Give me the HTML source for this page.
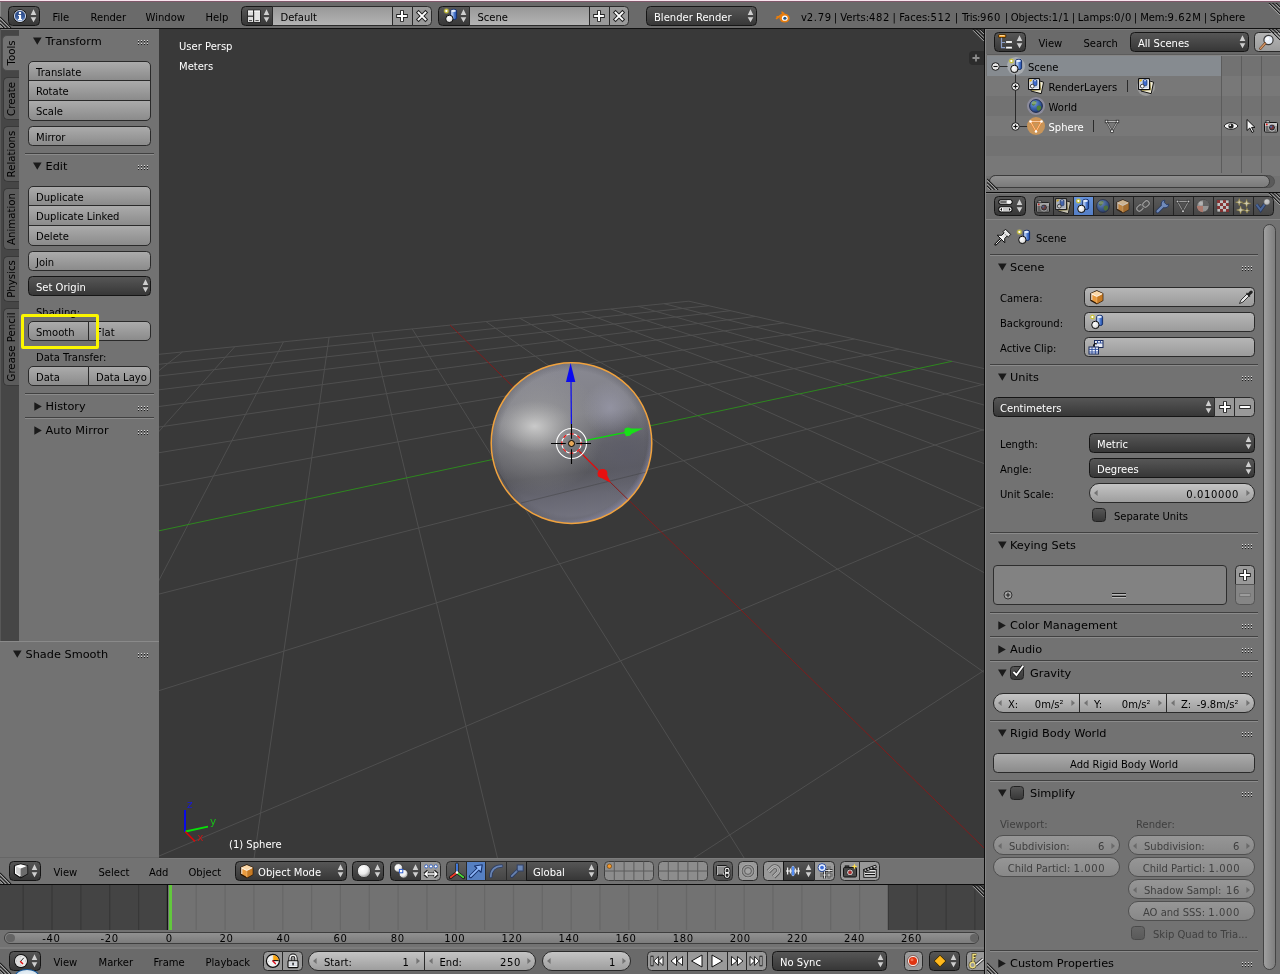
<!DOCTYPE html>
<html lang="en"><head><meta charset="utf-8"><title>Blender</title>
<style>
*{margin:0;padding:0;box-sizing:border-box}
html,body{width:1280px;height:974px;overflow:hidden;background:#727272}
body{position:relative;font-family:"DejaVu Sans", "Liberation Sans", sans-serif;font-size:10px;color:#000}
.a{position:absolute}
.t{position:absolute;white-space:nowrap;line-height:14px;height:14px}
.tw{color:#fff}
.n{letter-spacing:.64px}
.h{position:absolute;white-space:nowrap;font-size:11.3px;line-height:14px;height:14px}
.w{position:absolute;border:1px solid #2a2a2a;border-radius:4.5px;white-space:nowrap;overflow:hidden}
.tool{background:linear-gradient(#ababab,#8b8b8b)}
.reg{background:#999}
.menu{background:linear-gradient(#565656,#373737);color:#fff;border-color:#151515}
.num{background:linear-gradient(#c4c4c4,#9e9e9e);border-radius:10px}
.txt{background:linear-gradient(#989898,#b3b3b3)}
.opt{background:linear-gradient(#565656,#383838);border-radius:3.5px;border-color:#222}
.sep{position:absolute;height:1px;background:#8c8c8c}
.dis{opacity:.5}
svg{position:absolute;overflow:visible}
#app{position:absolute;left:0;top:0;width:1280px;height:974px;will-change:transform}
</style></head>
<body><div id="app">
<div class="a" style="left:0px;top:0px;width:1280px;height:1.2px;background:#f8e4ee;"></div>
<div class="a" style="left:0px;top:1.2px;width:1280px;height:0.8px;background:#80586a;"></div>
<div class="a" style="left:0px;top:2px;width:1280px;height:26px;background:#6a6a6a;"></div>
<div class="a" style="left:0px;top:2px;width:1px;height:26px;background:#868686;"></div>
<div class="a" style="left:0px;top:28px;width:1280px;height:1.2px;background:#101010;"></div>
<div class="a" style="left:0px;top:29px;width:159px;height:612px;background:#727272;"></div>
<div class="a" style="left:0px;top:29px;width:19px;height:612px;background:#464646;"></div>
<div class="a" style="left:0px;top:29px;width:159px;height:1px;background:#7a7a7a;"></div>
<div class="a" style="left:0px;top:29px;width:1px;height:612px;background:#585858;"></div>
<div class="a" style="left:0px;top:641px;width:159px;height:217px;background:#727272;"></div>
<div class="a" style="left:0px;top:641px;width:159px;height:1px;background:#8a8a8a;"></div>
<div class="a" style="left:0px;top:857px;width:159px;height:1px;background:#666666;"></div>
<div class="a" style="left:159px;top:29px;width:825px;height:829px;background:#393939;"></div>
<div class="a" style="left:0px;top:858px;width:984px;height:26px;background:#727272;"></div>
<div class="a" style="left:159px;top:857.6px;width:825px;height:1px;background:#7c7c7c;"></div>
<div class="a" style="left:0px;top:884px;width:984px;height:1px;background:#0c0c0c;"></div>
<div class="a" style="left:0px;top:885px;width:984px;height:45px;background:#727272;"></div>
<div class="a" style="left:0px;top:930px;width:984px;height:18px;background:#727272;"></div>
<div class="a" style="left:0px;top:948.6px;width:984px;height:25.4px;background:#6a6a6a;"></div>
<div class="a" style="left:984px;top:29px;width:1px;height:945px;background:#0c0c0c;"></div>
<div class="a" style="left:985px;top:29px;width:1px;height:945px;background:#868686;"></div>
<div class="a" style="left:986px;top:29px;width:294px;height:162px;background:#727272;"></div>
<div class="a" style="left:986px;top:29px;width:294px;height:25px;background:#6a6a6a;"></div>
<div class="a" style="left:986px;top:29px;width:294px;height:1px;background:#7c7c7c;"></div>
<div class="a" style="left:986px;top:191.5px;width:294px;height:1.5px;background:#0c0c0c;"></div>
<div class="a" style="left:986px;top:193px;width:294px;height:781px;background:#727272;"></div>
<div class="a" style="left:986px;top:193px;width:294px;height:25.8px;background:#6a6a6a;"></div>
<div class="a" style="left:986px;top:218.9px;width:294px;height:1.3px;background:#848484;"></div>
<div class="a" style="left:986px;top:193px;width:294px;height:1px;background:#7c7c7c;"></div>
<svg style="left:159px;top:29px;overflow:hidden" width="825" height="829" viewBox="159 29 825 829"><line x1="109.0" y1="359.3" x2="688.9" y2="301.2" stroke="#4f4f4f" stroke-width="1"/><line x1="109.0" y1="369.6" x2="708.6" y2="305.7" stroke="#4f4f4f" stroke-width="1"/><line x1="126.5" y1="357.5" x2="109.0" y2="368.3" stroke="#4f4f4f" stroke-width="1"/><line x1="109.0" y1="381.7" x2="730.6" y2="310.7" stroke="#4f4f4f" stroke-width="1"/><line x1="182.6" y1="351.9" x2="109.0" y2="410.2" stroke="#4f4f4f" stroke-width="1"/><line x1="109.0" y1="396.0" x2="755.6" y2="316.4" stroke="#4f4f4f" stroke-width="1"/><line x1="234.8" y1="346.7" x2="109.0" y2="487.2" stroke="#4f4f4f" stroke-width="1"/><line x1="109.0" y1="413.2" x2="784.0" y2="322.9" stroke="#4f4f4f" stroke-width="1"/><line x1="283.5" y1="341.8" x2="109.0" y2="676.1" stroke="#4f4f4f" stroke-width="1"/><line x1="109.0" y1="434.4" x2="816.6" y2="330.4" stroke="#4f4f4f" stroke-width="1"/><line x1="329.1" y1="337.2" x2="246.9" y2="908.0" stroke="#4f4f4f" stroke-width="1"/><line x1="109.0" y1="460.9" x2="854.5" y2="339.0" stroke="#4f4f4f" stroke-width="1"/><line x1="372.0" y1="333.0" x2="509.4" y2="908.0" stroke="#4f4f4f" stroke-width="1"/><line x1="109.0" y1="495.3" x2="899.0" y2="349.2" stroke="#4f4f4f" stroke-width="1"/><line x1="412.2" y1="328.9" x2="775.5" y2="908.0" stroke="#4f4f4f" stroke-width="1"/><line x1="109.0" y1="606.8" x2="1016.2" y2="376.0" stroke="#4f4f4f" stroke-width="1"/><line x1="485.9" y1="321.5" x2="1034.0" y2="707.5" stroke="#4f4f4f" stroke-width="1"/><line x1="109.0" y1="706.5" x2="1034.0" y2="413.7" stroke="#4f4f4f" stroke-width="1"/><line x1="519.7" y1="318.2" x2="1034.0" y2="600.0" stroke="#4f4f4f" stroke-width="1"/><line x1="109.0" y1="877.2" x2="1034.0" y2="486.0" stroke="#4f4f4f" stroke-width="1"/><line x1="551.6" y1="315.0" x2="1034.0" y2="530.7" stroke="#4f4f4f" stroke-width="1"/><line x1="616.7" y1="908.0" x2="1034.0" y2="638.1" stroke="#4f4f4f" stroke-width="1"/><line x1="581.9" y1="311.9" x2="1034.0" y2="482.4" stroke="#4f4f4f" stroke-width="1"/><line x1="610.7" y1="309.0" x2="1034.0" y2="446.7" stroke="#4f4f4f" stroke-width="1"/><line x1="638.1" y1="306.3" x2="1034.0" y2="419.3" stroke="#4f4f4f" stroke-width="1"/><line x1="664.1" y1="303.7" x2="1034.0" y2="397.7" stroke="#4f4f4f" stroke-width="1"/><line x1="688.9" y1="301.2" x2="1034.0" y2="380.0" stroke="#4f4f4f" stroke-width="1"/><line x1="450.1" y1="325.1" x2="1034.0" y2="897.0" stroke="#801c1c" stroke-width="1"/><line x1="109.0" y1="541.5" x2="952.0" y2="361.3" stroke="#2e871f" stroke-width="1"/></svg>
<svg style="left:0;top:0" width="1280" height="974">
<defs>
<linearGradient id="sg0" x1="0" y1="0" x2="0.12" y2="1"><stop offset="0" stop-color="#8a8a94"/><stop offset="0.38" stop-color="#808087"/><stop offset="0.58" stop-color="#626268"/><stop offset="0.74" stop-color="#57575d"/><stop offset="0.88" stop-color="#686873"/><stop offset="1" stop-color="#72727e"/></linearGradient>
<radialGradient id="sg1" cx="0.3" cy="0.42" r="0.4"><stop offset="0" stop-color="#a8a8a8" stop-opacity=".8"/><stop offset="1" stop-color="#9a9a9a" stop-opacity="0"/></radialGradient>
<radialGradient id="sg2" cx="0.27" cy="0.395" r="0.19" gradientTransform="translate(0.27 0.395) scale(1.3 0.85) translate(-0.27 -0.395)"><stop offset="0" stop-color="#cccccc" stop-opacity=".95"/><stop offset="1" stop-color="#b0b0b0" stop-opacity="0"/></radialGradient>
<radialGradient id="sg3" cx="0.84" cy="0.56" r="0.28"><stop offset="0" stop-color="#5c5c68" stop-opacity=".85"/><stop offset="1" stop-color="#62626e" stop-opacity="0"/></radialGradient>
<radialGradient id="sg4" cx="0.74" cy="0.28" r="0.17"><stop offset="0" stop-color="#9a9aac" stop-opacity=".7"/><stop offset="1" stop-color="#9a9aac" stop-opacity="0"/></radialGradient>
<radialGradient id="sg5" cx="0.455" cy="0.455" r="0.57"><stop offset="0.91" stop-color="#9090b0" stop-opacity="0"/><stop offset="1" stop-color="#9494b8" stop-opacity=".8"/></radialGradient>
<radialGradient id="sg6" cx="0.5" cy="0.5" r="0.5"><stop offset="0.9" stop-color="#505058" stop-opacity="0"/><stop offset="1" stop-color="#505058" stop-opacity=".35"/></radialGradient>
<clipPath id="sc"><circle cx="571.5" cy="443.1" r="80.3"/></clipPath>
</defs>
<circle cx="571.5" cy="443.1" r="80.3" fill="url(#sg0)"/>
<circle cx="571.5" cy="443.1" r="80.3" fill="url(#sg3)"/>
<circle cx="571.5" cy="443.1" r="80.3" fill="url(#sg1)"/>
<circle cx="571.5" cy="443.1" r="80.3" fill="url(#sg2)"/>
<circle cx="571.5" cy="443.1" r="80.3" fill="url(#sg4)"/>
<circle cx="571.5" cy="443.1" r="80.3" fill="url(#sg6)"/>
<circle cx="571.5" cy="443.1" r="80.3" fill="url(#sg5)"/>
<g clip-path="url(#sc)" opacity=".4"><line x1="521" y1="503" x2="648.3" y2="471.5" stroke="#3a3a3a" stroke-width="1"/><line x1="493" y1="462.7" x2="515.7" y2="501" stroke="#3a3a3a" stroke-width="1"/></g>
<line x1="606" y1="478" x2="633" y2="504.5" stroke="#8a1c1c" stroke-width="1" clip-path="url(#sc)"/>
<circle cx="571.5" cy="443.1" r="80.3" fill="none" stroke="#f0a23e" stroke-width="1.5"/>
<!-- manipulator -->
<line x1="571.4" y1="424" x2="571" y2="381" stroke="#0a0af0" stroke-width="1.2"/>
<path d="M570.6 363L575.3 382H566Z" fill="#0a0af0"/>
<line x1="585" y1="440.6" x2="628" y2="431.8" stroke="#08e008" stroke-width="1.2"/>
<path d="M643 428.5L626 436.5L624.5 428.5Z" fill="#18e018"/><ellipse cx="628" cy="431.8" rx="3.6" ry="4.2" fill="#18e018"/>
<line x1="579.2" y1="451.2" x2="598" y2="470" stroke="#e80808" stroke-width="1.2"/>
<path d="M611 483L597.5 476L604 469Z" fill="#e81010"/><ellipse cx="602.5" cy="473.5" rx="5" ry="4.5" fill="#e81010"/>
<!-- 3d cursor -->
<circle cx="571.5" cy="443.5" r="15" fill="none" stroke="#fff" stroke-width="1.1"/>
<circle cx="571.5" cy="443.5" r="9.7" fill="none" stroke="#fff" stroke-width="1.1"/>
<circle cx="571.5" cy="443.5" r="9.7" fill="none" stroke="#f00000" stroke-width="1.2" stroke-dasharray="3.8 3.82" stroke-dashoffset="1.9"/>
<path d="M571.5 424V438.8M571.5 449.2V464M551 443.5H565.8M576.2 443.5H591" stroke="#000" stroke-width="1.1"/>
<circle cx="571.5" cy="443.5" r="3" fill="#e8a858" stroke="#000" stroke-width="1"/>
<!-- mini axis -->
<line x1="185" y1="832" x2="185" y2="810" stroke="#0a0ae6" stroke-width="2"/>
<line x1="185.5" y1="831.5" x2="208" y2="826.6" stroke="#08e008" stroke-width="1.9"/>
<line x1="185.2" y1="831.6" x2="195" y2="841.4" stroke="#d80808" stroke-width="1.5"/>
<text x="187" y="808" font-size="10.5" fill="#1818d8">z</text>
<text x="210" y="825" font-size="10.5" fill="#18c018">y</text>
<text x="197.3" y="840.5" font-size="10.5" fill="#c01818">x</text>
</svg>
<div class="t tw" style="left:179px;top:40px;">User Persp</div>
<div class="t tw" style="left:179px;top:60px;">Meters</div>
<div class="t tw" style="left:229px;top:838px;">(1) Sphere</div>
<div class="a" style="left:969px;top:51px;width:15px;height:14px;background:#2c2c2c;border-radius:4px 0 0 4px"></div>
<svg style="left:972px;top:54px" width="8" height="8"><path d="M4 .5V7.5M.5 4H7.5" stroke="#8c8c8c" stroke-width="1.8"/></svg>
<svg style="left:972px;top:29px;overflow:hidden" width="12" height="12"><path d="M1 0L12 11M4.5 0L12 7.5M8 0L12 4" stroke="#1c1c1c" stroke-width="1.2" fill="none"/><path d="M1 0L12 11M4.5 0L12 7.5M8 0L12 4" stroke="#b0b0b0" stroke-width="1" fill="none" transform="translate(0,1.2)"/></svg>
<div class="a" style="left:2.3px;top:35px;width:17.2px;height:36px;background:#727272;border:1px solid #4c4c4c;border-right:none;border-radius:5px 0 0 5px"></div>
<div class="t" style="left:-38.3px;top:46.0px;width:100px;text-align:center;transform:rotate(-90deg);font-size:10.2px">Tools</div>
<div class="a" style="left:3.3px;top:77px;width:16.2px;height:43px;background:#5b5b5b;border:1px solid #383838;border-right:none;border-radius:5px 0 0 5px"></div>
<div class="t" style="left:-38.3px;top:91.5px;width:100px;text-align:center;transform:rotate(-90deg);font-size:10.2px">Create</div>
<div class="a" style="left:3.3px;top:125.5px;width:16.2px;height:56.5px;background:#5b5b5b;border:1px solid #383838;border-right:none;border-radius:5px 0 0 5px"></div>
<div class="t" style="left:-38.3px;top:146.75px;width:100px;text-align:center;transform:rotate(-90deg);font-size:10.2px">Relations</div>
<div class="a" style="left:3.3px;top:187.5px;width:16.2px;height:62.5px;background:#5b5b5b;border:1px solid #383838;border-right:none;border-radius:5px 0 0 5px"></div>
<div class="t" style="left:-38.3px;top:211.75px;width:100px;text-align:center;transform:rotate(-90deg);font-size:10.2px">Animation</div>
<div class="a" style="left:3.3px;top:255.5px;width:16.2px;height:46.5px;background:#5b5b5b;border:1px solid #383838;border-right:none;border-radius:5px 0 0 5px"></div>
<div class="t" style="left:-38.3px;top:271.75px;width:100px;text-align:center;transform:rotate(-90deg);font-size:10.2px">Physics</div>
<div class="a" style="left:3.3px;top:307.5px;width:16.2px;height:78.5px;background:#5b5b5b;border:1px solid #383838;border-right:none;border-radius:5px 0 0 5px"></div>
<div class="t" style="left:-38.3px;top:339.75px;width:100px;text-align:center;transform:rotate(-90deg);font-size:10.2px">Grease Pencil</div>
<svg style="left:33px;top:37.0px" width="9" height="8"><path d="M0 0.5H8.6L4.3 7.8Z" fill="#1a1a1a"/></svg>
<div class="h" style="left:45.5px;top:34.5px;">Transform</div>
<svg style="left:138px;top:40.0px" width="11" height="5" shape-rendering="crispEdges"><rect x="0" y="0" width="1.2" height="1" fill="#dcdcdc"/><rect x="0" y="1" width="1.2" height="1" fill="#1e1e1e"/><rect x="0" y="3" width="1.2" height="1" fill="#dcdcdc"/><rect x="0" y="4" width="1.2" height="1" fill="#1e1e1e"/><rect x="3" y="0" width="1.2" height="1" fill="#dcdcdc"/><rect x="3" y="1" width="1.2" height="1" fill="#1e1e1e"/><rect x="3" y="3" width="1.2" height="1" fill="#dcdcdc"/><rect x="3" y="4" width="1.2" height="1" fill="#1e1e1e"/><rect x="6" y="0" width="1.2" height="1" fill="#dcdcdc"/><rect x="6" y="1" width="1.2" height="1" fill="#1e1e1e"/><rect x="6" y="3" width="1.2" height="1" fill="#dcdcdc"/><rect x="6" y="4" width="1.2" height="1" fill="#1e1e1e"/><rect x="9" y="0" width="1.2" height="1" fill="#dcdcdc"/><rect x="9" y="1" width="1.2" height="1" fill="#1e1e1e"/><rect x="9" y="3" width="1.2" height="1" fill="#dcdcdc"/><rect x="9" y="4" width="1.2" height="1" fill="#1e1e1e"/></svg>
<div class="w tool" style="left:28px;top:61px;width:123px;height:20px;border-radius:5px 5px 0 0;"><span class="t" style="top:3.5px;left:7px;">Translate</span></div>
<div class="w tool" style="left:28px;top:80px;width:123px;height:21px;border-radius:0;"><span class="t" style="top:3.5px;left:7px;">Rotate</span></div>
<div class="w tool" style="left:28px;top:100px;width:123px;height:21px;border-radius:0 0 5px 5px;"><span class="t" style="top:3.5px;left:7px;">Scale</span></div>
<div class="w tool" style="left:28px;top:126px;width:123px;height:20px;"><span class="t" style="top:3.5px;left:7px;">Mirror</span></div>
<div class="a" style="left:25px;top:153px;width:129px;height:1px;background:#414141"></div><div class="a" style="left:25px;top:154px;width:129px;height:1px;background:#8b8b8b"></div>
<svg style="left:33px;top:162.0px" width="9" height="8"><path d="M0 0.5H8.6L4.3 7.8Z" fill="#1a1a1a"/></svg>
<div class="h" style="left:45.5px;top:159.5px;">Edit</div>
<svg style="left:138px;top:165.0px" width="11" height="5" shape-rendering="crispEdges"><rect x="0" y="0" width="1.2" height="1" fill="#dcdcdc"/><rect x="0" y="1" width="1.2" height="1" fill="#1e1e1e"/><rect x="0" y="3" width="1.2" height="1" fill="#dcdcdc"/><rect x="0" y="4" width="1.2" height="1" fill="#1e1e1e"/><rect x="3" y="0" width="1.2" height="1" fill="#dcdcdc"/><rect x="3" y="1" width="1.2" height="1" fill="#1e1e1e"/><rect x="3" y="3" width="1.2" height="1" fill="#dcdcdc"/><rect x="3" y="4" width="1.2" height="1" fill="#1e1e1e"/><rect x="6" y="0" width="1.2" height="1" fill="#dcdcdc"/><rect x="6" y="1" width="1.2" height="1" fill="#1e1e1e"/><rect x="6" y="3" width="1.2" height="1" fill="#dcdcdc"/><rect x="6" y="4" width="1.2" height="1" fill="#1e1e1e"/><rect x="9" y="0" width="1.2" height="1" fill="#dcdcdc"/><rect x="9" y="1" width="1.2" height="1" fill="#1e1e1e"/><rect x="9" y="3" width="1.2" height="1" fill="#dcdcdc"/><rect x="9" y="4" width="1.2" height="1" fill="#1e1e1e"/></svg>
<div class="w tool" style="left:28px;top:186px;width:123px;height:20px;border-radius:5px 5px 0 0;"><span class="t" style="top:3.5px;left:7px;">Duplicate</span></div>
<div class="w tool" style="left:28px;top:205px;width:123px;height:21px;border-radius:0;"><span class="t" style="top:3.5px;left:7px;">Duplicate Linked</span></div>
<div class="w tool" style="left:28px;top:225px;width:123px;height:21px;border-radius:0 0 5px 5px;"><span class="t" style="top:3.5px;left:7px;">Delete</span></div>
<div class="w tool" style="left:28px;top:251px;width:123px;height:20px;"><span class="t" style="top:3.5px;left:7px;">Join</span></div>
<div class="w menu" style="left:28px;top:276px;width:123px;height:20px;"><span class="t" style="top:3.5px;left:7px;">Set Origin</span></div>
<svg style="left:141.5px;top:279px" width="7" height="14"><path d="M3.5 .2L6.3 5.9H0.7Z M3.5 13.2L6.3 8.2H0.7Z" fill="#d0d0d0"/></svg>
<div class="t" style="left:36px;top:305.5px;">Shading:</div>
<div class="w tool" style="left:28px;top:321px;width:61px;height:20px;border-radius:5px 0 0 5px;"><span class="t" style="top:3.5px;left:7px;">Smooth</span></div>
<div class="w tool" style="left:88px;top:321px;width:63px;height:20px;border-radius:0 5px 5px 0;"><span class="t" style="top:3.5px;left:7px;">Flat</span></div>
<div class="t" style="left:36px;top:350.5px;">Data Transfer:</div>
<div class="w tool" style="left:28px;top:366px;width:61px;height:20px;border-radius:5px 0 0 5px;"><span class="t" style="top:3.5px;left:7px;">Data</span></div>
<div class="w tool" style="left:88px;top:366px;width:63px;height:20px;border-radius:0 5px 5px 0;"><span class="t" style="top:3.5px;left:7px;">Data Layo</span></div>
<div class="a" style="left:25px;top:393px;width:129px;height:1px;background:#414141"></div><div class="a" style="left:25px;top:394px;width:129px;height:1px;background:#8b8b8b"></div>
<svg style="left:33.5px;top:402.0px" width="8" height="9"><path d="M0.3 0.2V8.8L7.8 4.5Z" fill="#1a1a1a"/></svg>
<div class="h" style="left:45.5px;top:400px;">History</div>
<svg style="left:138px;top:405.5px" width="11" height="5" shape-rendering="crispEdges"><rect x="0" y="0" width="1.2" height="1" fill="#dcdcdc"/><rect x="0" y="1" width="1.2" height="1" fill="#1e1e1e"/><rect x="0" y="3" width="1.2" height="1" fill="#dcdcdc"/><rect x="0" y="4" width="1.2" height="1" fill="#1e1e1e"/><rect x="3" y="0" width="1.2" height="1" fill="#dcdcdc"/><rect x="3" y="1" width="1.2" height="1" fill="#1e1e1e"/><rect x="3" y="3" width="1.2" height="1" fill="#dcdcdc"/><rect x="3" y="4" width="1.2" height="1" fill="#1e1e1e"/><rect x="6" y="0" width="1.2" height="1" fill="#dcdcdc"/><rect x="6" y="1" width="1.2" height="1" fill="#1e1e1e"/><rect x="6" y="3" width="1.2" height="1" fill="#dcdcdc"/><rect x="6" y="4" width="1.2" height="1" fill="#1e1e1e"/><rect x="9" y="0" width="1.2" height="1" fill="#dcdcdc"/><rect x="9" y="1" width="1.2" height="1" fill="#1e1e1e"/><rect x="9" y="3" width="1.2" height="1" fill="#dcdcdc"/><rect x="9" y="4" width="1.2" height="1" fill="#1e1e1e"/></svg>
<div class="a" style="left:25px;top:417px;width:129px;height:1px;background:#414141"></div><div class="a" style="left:25px;top:418px;width:129px;height:1px;background:#8b8b8b"></div>
<svg style="left:33.5px;top:426.0px" width="8" height="9"><path d="M0.3 0.2V8.8L7.8 4.5Z" fill="#1a1a1a"/></svg>
<div class="h" style="left:45.5px;top:424px;">Auto Mirror</div>
<svg style="left:138px;top:429.5px" width="11" height="5" shape-rendering="crispEdges"><rect x="0" y="0" width="1.2" height="1" fill="#dcdcdc"/><rect x="0" y="1" width="1.2" height="1" fill="#1e1e1e"/><rect x="0" y="3" width="1.2" height="1" fill="#dcdcdc"/><rect x="0" y="4" width="1.2" height="1" fill="#1e1e1e"/><rect x="3" y="0" width="1.2" height="1" fill="#dcdcdc"/><rect x="3" y="1" width="1.2" height="1" fill="#1e1e1e"/><rect x="3" y="3" width="1.2" height="1" fill="#dcdcdc"/><rect x="3" y="4" width="1.2" height="1" fill="#1e1e1e"/><rect x="6" y="0" width="1.2" height="1" fill="#dcdcdc"/><rect x="6" y="1" width="1.2" height="1" fill="#1e1e1e"/><rect x="6" y="3" width="1.2" height="1" fill="#dcdcdc"/><rect x="6" y="4" width="1.2" height="1" fill="#1e1e1e"/><rect x="9" y="0" width="1.2" height="1" fill="#dcdcdc"/><rect x="9" y="1" width="1.2" height="1" fill="#1e1e1e"/><rect x="9" y="3" width="1.2" height="1" fill="#dcdcdc"/><rect x="9" y="4" width="1.2" height="1" fill="#1e1e1e"/></svg>
<div class="a" style="left:21.2px;top:313.9px;width:78px;height:35px;border:3.1px solid #fbf600;border-radius:2px"></div>
<svg style="left:13px;top:650.0px" width="9" height="8"><path d="M0 0.5H8.6L4.3 7.8Z" fill="#1a1a1a"/></svg>
<div class="h" style="left:25.5px;top:647.5px;">Shade Smooth</div>
<svg style="left:138px;top:653.0px" width="11" height="5" shape-rendering="crispEdges"><rect x="0" y="0" width="1.2" height="1" fill="#dcdcdc"/><rect x="0" y="1" width="1.2" height="1" fill="#1e1e1e"/><rect x="0" y="3" width="1.2" height="1" fill="#dcdcdc"/><rect x="0" y="4" width="1.2" height="1" fill="#1e1e1e"/><rect x="3" y="0" width="1.2" height="1" fill="#dcdcdc"/><rect x="3" y="1" width="1.2" height="1" fill="#1e1e1e"/><rect x="3" y="3" width="1.2" height="1" fill="#dcdcdc"/><rect x="3" y="4" width="1.2" height="1" fill="#1e1e1e"/><rect x="6" y="0" width="1.2" height="1" fill="#dcdcdc"/><rect x="6" y="1" width="1.2" height="1" fill="#1e1e1e"/><rect x="6" y="3" width="1.2" height="1" fill="#dcdcdc"/><rect x="6" y="4" width="1.2" height="1" fill="#1e1e1e"/><rect x="9" y="0" width="1.2" height="1" fill="#dcdcdc"/><rect x="9" y="1" width="1.2" height="1" fill="#1e1e1e"/><rect x="9" y="3" width="1.2" height="1" fill="#dcdcdc"/><rect x="9" y="4" width="1.2" height="1" fill="#1e1e1e"/></svg>
<svg style="left:0px;top:16px;overflow:hidden" width="12" height="12"><path d="M0 1L11 12M0 4.5L7.5 12M0 8L4 12" stroke="#1c1c1c" stroke-width="1.2" fill="none"/><path d="M0 1L11 12M0 4.5L7.5 12M0 8L4 12" stroke="#b0b0b0" stroke-width="1" fill="none" transform="translate(0,1.2)"/></svg>
<svg style="left:1268px;top:2.5px;overflow:hidden" width="12" height="12"><path d="M1 0L12 11M4.5 0L12 7.5M8 0L12 4" stroke="#1c1c1c" stroke-width="1.2" fill="none"/><path d="M1 0L12 11M4.5 0L12 7.5M8 0L12 4" stroke="#b0b0b0" stroke-width="1" fill="none" transform="translate(0,1.2)"/></svg>
<div class="w menu" style="left:8px;top:6px;width:32px;height:20px;"></div>
<svg style="left:12px;top:8.0px" width="16" height="16" viewBox="0 0 16 16"><defs><linearGradient id="gin" x1="0" y1="0" x2="0" y2="1"><stop offset="0" stop-color="#24427e"/><stop offset=".6" stop-color="#3a5c9c"/><stop offset="1" stop-color="#7a9ad4"/></linearGradient></defs><circle cx="8" cy="8" r="6.7" fill="#111"/><circle cx="8" cy="8" r="5.6" fill="url(#gin)" stroke="#dfe6f4" stroke-width=".9"/><path d="M6.2 6.9H9.1V11H10V12.2H6V11H7V8.1H6.2Z" fill="#fff"/><circle cx="8" cy="4.9" r="1.25" fill="#fff"/></svg>
<svg style="left:29.5px;top:9.2px" width="7" height="14"><path d="M3.5 .2L6.3 5.9H0.7Z M3.5 13.2L6.3 8.2H0.7Z" fill="#cfcfcf"/></svg>
<div class="t" style="left:52.5px;top:10.5px;">File</div>
<div class="t" style="left:90.5px;top:10.5px;">Render</div>
<div class="t" style="left:145.5px;top:10.5px;">Window</div>
<div class="t" style="left:205.5px;top:10.5px;">Help</div>
<div class="w menu" style="left:241px;top:6px;width:32px;height:20px;border-radius:4.5px 0 0 4.5px;"></div>
<svg style="left:245.5px;top:8px" width="16" height="16" viewBox="0 0 16 16"><rect x="1" y="1.5" width="14" height="13.5" rx="1.5" fill="#2a2a2a"/><rect x="2" y="2.6" width="5" height="5" fill="#dedede"/><rect x="2" y="8.8" width="5" height="5.2" fill="#dedede"/><rect x="8.2" y="2.6" width="5.8" height="11.4" fill="#e4e4e4"/><path d="M3 12.6H6M9.4 12.6H12.8" stroke="#444" stroke-width="1"/><path d="M2 3.1H7M8.2 3.1H14" stroke="#fff" stroke-width="1"/></svg>
<svg style="left:262.5px;top:9.2px" width="7" height="14"><path d="M3.5 .2L6.3 5.9H0.7Z M3.5 13.2L6.3 8.2H0.7Z" fill="#cfcfcf"/></svg>
<div class="w txt" style="left:272px;top:6px;width:121px;height:20px;border-radius:0;"><span class="t" style="top:3.5px;left:7.5px;">Default</span></div>
<div class="w reg" style="left:392px;top:6px;width:21px;height:20px;border-radius:0;"></div>
<svg style="left:396.4px;top:10px" width="12" height="12"><path d="M6 .2V11.8M.2 6H11.8" stroke="#222" stroke-width="3.8"/><path d="M6 1.1V10.9M1.1 6H10.9" stroke="#fff" stroke-width="2"/></svg>
<div class="w reg" style="left:412px;top:6px;width:20px;height:20px;border-radius:0 4.5px 4.5px 0;"></div>
<svg style="left:416.2px;top:10px" width="12" height="12"><path d="M1.2 1.2L10.8 10.8M10.8 1.2L1.2 10.8" stroke="#222" stroke-width="3.8"/><path d="M1.9 1.9L10.1 10.1M10.1 1.9L1.9 10.1" stroke="#fff" stroke-width="2"/></svg>
<div class="w menu" style="left:438px;top:6px;width:32px;height:20px;border-radius:4.5px 0 0 4.5px;"></div>
<svg style="left:442.5px;top:8px" width="16" height="16" viewBox="0 0 16 16"><defs><linearGradient id="gcy" x1="0" y1="0" x2="1" y2="0"><stop offset="0" stop-color="#e8f0ff"/><stop offset=".35" stop-color="#9ab8ec"/><stop offset=".7" stop-color="#3a6ac4"/><stop offset="1" stop-color="#2a52a8"/></linearGradient><radialGradient id="gsp" cx=".38" cy=".35" r=".75"><stop offset="0" stop-color="#fff"/><stop offset=".6" stop-color="#e4e4e4"/><stop offset="1" stop-color="#8a8a8a"/></radialGradient></defs><circle cx="3.4" cy="3" r="2.9" fill="#e8e070" opacity=".25"/><circle cx="3.4" cy="3" r="1.7" fill="#fff" stroke="#c4bc2c" stroke-width="1.1"/><rect x="7.7" y="1.3" width="5.9" height="10.2" rx="2.4" ry="1.6" fill="url(#gcy)" stroke="#16306c" stroke-width="1"/><ellipse cx="10.6" cy="2.9" rx="2.3" ry="1.1" fill="#eef4ff" opacity=".9"/><circle cx="6.4" cy="10.9" r="3.7" fill="url(#gsp)" stroke="#0c0c0c" stroke-width="1"/></svg>
<svg style="left:459.5px;top:9.2px" width="7" height="14"><path d="M3.5 .2L6.3 5.9H0.7Z M3.5 13.2L6.3 8.2H0.7Z" fill="#cfcfcf"/></svg>
<div class="w txt" style="left:469px;top:6px;width:121px;height:20px;border-radius:0;"><span class="t" style="top:3.5px;left:7.5px;">Scene</span></div>
<div class="w reg" style="left:589px;top:6px;width:21px;height:20px;border-radius:0;"></div>
<svg style="left:593.4px;top:10px" width="12" height="12"><path d="M6 .2V11.8M.2 6H11.8" stroke="#222" stroke-width="3.8"/><path d="M6 1.1V10.9M1.1 6H10.9" stroke="#fff" stroke-width="2"/></svg>
<div class="w reg" style="left:609px;top:6px;width:20px;height:20px;border-radius:0 4.5px 4.5px 0;"></div>
<svg style="left:613.2px;top:10px" width="12" height="12"><path d="M1.2 1.2L10.8 10.8M10.8 1.2L1.2 10.8" stroke="#222" stroke-width="3.8"/><path d="M1.9 1.9L10.1 10.1M10.1 1.9L1.9 10.1" stroke="#fff" stroke-width="2"/></svg>
<div class="w menu" style="left:646px;top:6px;width:111px;height:20px;"><span class="t" style="top:3.5px;left:7px;">Blender Render</span></div>
<svg style="left:746.5px;top:9.2px" width="7" height="14"><path d="M3.5 .2L6.3 5.9H0.7Z M3.5 13.2L6.3 8.2H0.7Z" fill="#cfcfcf"/></svg>
<svg style="left:775px;top:8.5px" width="16" height="16" viewBox="0 0 16 16"><path d="M1.5 9.5L8.5 4.2L7 3.2" stroke="#e87d0d" stroke-width="1.6" fill="none" stroke-linecap="round"/><path d="M2 7.6H7" stroke="#e87d0d" stroke-width="1.4" stroke-linecap="round"/><ellipse cx="9.6" cy="9.2" rx="5" ry="4.4" fill="#e87d0d"/><ellipse cx="9.8" cy="9.2" rx="2.9" ry="2.6" fill="#fff"/><ellipse cx="9.9" cy="9.2" rx="1.6" ry="1.5" fill="#265787"/></svg>
<div class="t" style="left:800.95px;top:10.5px;white-space:pre"><span style="display:inline-block;width:29.60px">v<span class="n">2.79</span></span><span style="display:inline-block;width:9.75px"> | </span><span style="display:inline-block;width:49.00px">Verts:<span class="n">482</span></span><span style="display:inline-block;width:10.00px"> | </span><span style="display:inline-block;width:52.25px"><span style="letter-spacing:0px">Faces:</span><span class="n">512</span></span><span style="display:inline-block;width:10.35px"> | </span><span style="display:inline-block;width:39.65px"><span style="letter-spacing:-0.42px">Tris:</span><span class="n">960</span></span><span style="display:inline-block;width:9.14px"> | </span><span style="display:inline-block;width:57.96px">Objects:<span class="n">1/1</span></span><span style="display:inline-block;width:9.10px"> | </span><span style="display:inline-block;width:52.80px">Lamps:<span class="n">0/0</span></span><span style="display:inline-block;width:9.85px"> | </span><span style="display:inline-block;width:60.15px"><span style="letter-spacing:-0.2px">Mem:</span><span class="n">9.62</span>M</span><span style="display:inline-block;width:9.39px"> | </span><span style="display:inline-block;width:50.06px">Sphere</span></div>
<svg style="left:0px;top:872px;overflow:hidden" width="12" height="12"><path d="M0 1L11 12M0 4.5L7.5 12M0 8L4 12" stroke="#1c1c1c" stroke-width="1.2" fill="none"/><path d="M0 1L11 12M0 4.5L7.5 12M0 8L4 12" stroke="#b0b0b0" stroke-width="1" fill="none" transform="translate(0,1.2)"/></svg>
<div class="w menu" style="left:9px;top:861px;width:32px;height:20px;"></div>
<svg style="left:13px;top:863.0px" width="16" height="16" viewBox="0 0 16 16"><path d="M7.7 1.2L14.4 2.9V10.7L7.7 14.5L1.6 10.7V2.9Z" fill="#cfcfcf" stroke="#0a0a0a" stroke-width="1.5" stroke-linejoin="round"/><path d="M7.7 1.2L14.4 2.9L7.7 5.4L1.6 2.9Z" fill="#fff"/><path d="M7.7 5.4L14.4 2.9V10.7L7.7 14.5Z" fill="#6c6c6c"/><path d="M2.5 3.4V10.2L7.2 13.2" stroke="#fff" stroke-width="1.1" fill="none"/></svg>
<svg style="left:30.5px;top:864.2px" width="7" height="14"><path d="M3.5 .2L6.3 5.9H0.7Z M3.5 13.2L6.3 8.2H0.7Z" fill="#cfcfcf"/></svg>
<div class="t" style="left:53.5px;top:865.5px;">View</div>
<div class="t" style="left:98.5px;top:865.5px;">Select</div>
<div class="t" style="left:149px;top:865.5px;">Add</div>
<div class="t" style="left:188.5px;top:865.5px;">Object</div>
<div class="w menu" style="left:234.5px;top:861px;width:112.5px;height:20px;"><span class="t" style="top:3.5px;left:22.6px;">Object Mode</span></div>
<svg style="left:238.5px;top:863.0px" width="16" height="16" viewBox="0 0 16 16"><path d="M7.8 1.9L13.7 4.5V11.4L7.8 14.7L1.9 11.4V4.5Z" fill="#e99a3e" stroke="#2a1604" stroke-width="1.3" stroke-linejoin="round"/><path d="M7.8 1.9L13.7 4.5L7.8 7.4L1.9 4.5Z" fill="#fbd8a8"/><path d="M7.8 7.4L13.7 4.5V11.4L7.8 14.7Z" fill="#c67a24"/><path d="M2.8 5.2V11M2.4 4.8L7.8 7.5L13.2 4.8" stroke="#fff" stroke-width="1" fill="none" opacity=".9"/><path d="M7.8 7.8V14.2" stroke="#f4c080" stroke-width=".8" opacity=".8"/></svg>
<svg style="left:336.5px;top:864.2px" width="7" height="14"><path d="M3.5 .2L6.3 5.9H0.7Z M3.5 13.2L6.3 8.2H0.7Z" fill="#cfcfcf"/></svg>
<div class="w menu" style="left:352px;top:861px;width:32px;height:20px;"></div>
<svg style="left:356px;top:863.0px" width="16" height="16" viewBox="0 0 16 16"><defs><radialGradient id="gso" cx=".38" cy=".35" r=".7"><stop offset="0" stop-color="#fff"/><stop offset=".55" stop-color="#ececec"/><stop offset="1" stop-color="#8c8c8c"/></radialGradient></defs><circle cx="8" cy="8" r="6.6" fill="url(#gso)" stroke="#2a2a2a" stroke-width=".8"/></svg>
<svg style="left:373.5px;top:864.2px" width="7" height="14"><path d="M3.5 .2L6.3 5.9H0.7Z M3.5 13.2L6.3 8.2H0.7Z" fill="#cfcfcf"/></svg>
<div class="w menu" style="left:389.5px;top:861px;width:31px;height:20px;border-radius:4.5px 0 0 4.5px;"></div>
<svg style="left:393px;top:863px" width="16" height="16" viewBox="0 0 16 16"><circle cx="5.4" cy="5" r="4.4" fill="url(#gso)" stroke="#333" stroke-width=".8"/><circle cx="10.6" cy="10.8" r="4.4" fill="url(#gso)" stroke="#333" stroke-width=".8"/><rect x="6.4" y="6.4" width="3.4" height="3.4" fill="#fff" stroke="#2a5ad0" stroke-width="1"/></svg>
<svg style="left:411.5px;top:864px" width="7" height="14"><path d="M3.5 .2L6.3 5.9H0.7Z M3.5 13.2L6.3 8.2H0.7Z" fill="#cfcfcf"/></svg>
<div class="w reg" style="left:419.5px;top:861px;width:21.5px;height:20px;border-radius:0 4.5px 4.5px 0;"></div>
<svg style="left:422.5px;top:863px" width="16" height="16" viewBox="0 0 16 16"><path d="M1.5 11H14.5M1.5 11L5 8M1.5 11L5 14M14.5 11L11 8M14.5 11L11 14" stroke="#222" stroke-width="3" fill="none" stroke-linejoin="round"/><path d="M2 11H14M2 11L5 8.4M2 11L5 13.6M14 11L11 8.4M14 11L11 13.6" stroke="#fff" stroke-width="1.3" fill="none"/><circle cx="3.2" cy="3.4" r="1.6" fill="#fff" stroke="#2a5ac0" stroke-width=".9"/><circle cx="8" cy="3.4" r="1.6" fill="#fff" stroke="#2a5ac0" stroke-width=".9"/><circle cx="12.8" cy="3.4" r="1.6" fill="#fff" stroke="#2a5ac0" stroke-width=".9"/></svg>
<div class="w reg" style="left:446px;top:861px;width:20.5px;height:20px;border-radius:4.5px 0 0 4.5px;background:linear-gradient(#606060,#4c4c4c);"></div>
<svg style="left:448.5px;top:863px" width="16" height="16" viewBox="0 0 16 16"><path d="M8 9.5V1M8 9.5L1.5 14.5M8 9.5L14.5 14.5" stroke="#1a1a1a" stroke-width="3.2" fill="none" stroke-linecap="round"/><path d="M8 9.5V1.2" stroke="#4a8af8" stroke-width="1.7" stroke-linecap="round"/><path d="M8 9.5L1.7 14.3" stroke="#f03a2a" stroke-width="1.7" stroke-linecap="round"/><path d="M8 9.5L14.3 14.3" stroke="#4ad83a" stroke-width="1.7" stroke-linecap="round"/><circle cx="8" cy="9.5" r="1.3" fill="#fff"/></svg>
<div class="w reg" style="left:465.5px;top:861px;width:20.5px;height:20px;border-radius:0;background:#5680c2;"></div>
<svg style="left:468px;top:863px" width="16" height="16" viewBox="0 0 16 16"><path d="M2.6 13.4L10 6" stroke="#16306a" stroke-width="3.6" stroke-linecap="round"/><path d="M14.2 1.8L13 9.4L6.6 3Z" fill="#8cb6fa" stroke="#16306a" stroke-width="1.1" stroke-linejoin="round"/><path d="M2.8 13.2L10.4 5.6" stroke="#8cb6fa" stroke-width="1.8" stroke-linecap="round"/></svg>
<div class="w reg" style="left:485px;top:861px;width:21.5px;height:20px;border-radius:0;background:linear-gradient(#5c5c5c,#454545);"></div>
<svg style="left:488px;top:863px" width="16" height="16" viewBox="0 0 16 16"><g opacity=".62"><path d="M2.8 13.6C2.8 7 7 3 13.6 3" stroke="#1a3470" stroke-width="3.4" fill="none" stroke-linecap="round"/><path d="M2.8 13.6C2.8 7 7 3 13.6 3" stroke="#7aa6f0" stroke-width="1.7" fill="none" stroke-linecap="round"/></g></svg>
<div class="w reg" style="left:505.5px;top:861px;width:21.5px;height:20px;border-radius:0;background:linear-gradient(#5c5c5c,#454545);"></div>
<svg style="left:508.5px;top:863px" width="16" height="16" viewBox="0 0 16 16"><g opacity=".62"><path d="M2.8 13.2L9.6 6.4" stroke="#1a3470" stroke-width="3.4" stroke-linecap="round"/><path d="M2.8 13.2L9.6 6.4" stroke="#7aa6f0" stroke-width="1.7" stroke-linecap="round"/><rect x="8.2" y="2" width="6" height="6" fill="#7aa6f0" stroke="#1a3470" stroke-width="1"/></g></svg>
<div class="w menu" style="left:526px;top:861px;width:72px;height:20px;border-radius:0 4.5px 4.5px 0;"><span class="t" style="top:3.5px;left:6px;">Global</span></div>
<svg style="left:587.5px;top:864px" width="7" height="14"><path d="M3.5 .2L6.3 5.9H0.7Z M3.5 13.2L6.3 8.2H0.7Z" fill="#cfcfcf"/></svg>
<svg style="left:603.5px;top:861px" width="50" height="20"><rect x=".5" y=".5" width="49" height="19" rx="4" fill="#8d8d8d" stroke="#3e3e3e"/><line x1="10.3" y1=".5" x2="10.3" y2="19.5" stroke="#5c5c5c"/><line x1="20.1" y1=".5" x2="20.1" y2="19.5" stroke="#5c5c5c"/><line x1="29.9" y1=".5" x2="29.9" y2="19.5" stroke="#5c5c5c"/><line x1="39.7" y1=".5" x2="39.7" y2="19.5" stroke="#5c5c5c"/><line x1=".5" y1="10.0" x2="49.5" y2="10.0" stroke="#5c5c5c"/><circle cx="5.4" cy="5.2" r="2.2" fill="#f49a2c" stroke="#5a3408" stroke-width=".6"/></svg>
<svg style="left:658px;top:861px" width="50" height="20"><rect x=".5" y=".5" width="49" height="19" rx="4" fill="#8d8d8d" stroke="#3e3e3e"/><line x1="10.3" y1=".5" x2="10.3" y2="19.5" stroke="#5c5c5c"/><line x1="20.1" y1=".5" x2="20.1" y2="19.5" stroke="#5c5c5c"/><line x1="29.9" y1=".5" x2="29.9" y2="19.5" stroke="#5c5c5c"/><line x1="39.7" y1=".5" x2="39.7" y2="19.5" stroke="#5c5c5c"/><line x1=".5" y1="10.0" x2="49.5" y2="10.0" stroke="#5c5c5c"/></svg>
<div class="w reg" style="left:713px;top:861px;width:20px;height:20px;background:linear-gradient(#626262,#4e4e4e);"></div>
<svg style="left:715px;top:863px" width="16" height="16" viewBox="0 0 16 16"><rect x="1.5" y="2.5" width="10.5" height="10" rx="1" fill="#c4c4c4" stroke="#1a1a1a" stroke-width="1"/><rect x="2.6" y="3.6" width="8.3" height="6.6" fill="#8c8c8c"/><path d="M3 11.2H8" stroke="#333" stroke-width="1.2"/><rect x="10.2" y="5.4" width="3.8" height="5" rx="1.9" fill="none" stroke="#111" stroke-width="2.6"/><rect x="10.2" y="9.4" width="3.8" height="5" rx="1.9" fill="none" stroke="#111" stroke-width="2.6"/><rect x="10.2" y="5.4" width="3.8" height="5" rx="1.9" fill="none" stroke="#f0f0f0" stroke-width="1.1"/><rect x="10.2" y="9.4" width="3.8" height="5" rx="1.9" fill="none" stroke="#f0f0f0" stroke-width="1.1"/></svg>
<div class="w reg" style="left:738px;top:861px;width:20px;height:20px;"></div>
<svg style="left:740px;top:863px" width="16" height="16" viewBox="0 0 16 16"><circle cx="8" cy="8" r="6" fill="none" stroke="#5e5e5e" stroke-width="1.2"/><circle cx="8" cy="8" r="3.4" fill="#a4a4a4" stroke="#5e5e5e" stroke-width="1"/><circle cx="8" cy="8" r="6.8" fill="none" stroke="#b8b8b8" stroke-width=".6"/></svg>
<div class="w reg" style="left:763px;top:861px;width:20.5px;height:20px;border-radius:4.5px 0 0 4.5px;"></div>
<svg style="left:765px;top:863px" width="16" height="16" viewBox="0 0 16 16"><path d="M3.4 8.6L7.6 4.4A3.7 3.7 0 0 1 12.8 9.6L8.6 13.8" stroke="#5a5a5a" stroke-width="4.6" fill="none"/><path d="M3.4 8.6L7.6 4.4A3.7 3.7 0 0 1 12.8 9.6L8.6 13.8" stroke="#b4b4b4" stroke-width="2.8" fill="none"/><path d="M3.4 8.6L7.6 4.4A3.7 3.7 0 0 1 12.8 9.6L8.6 13.8" stroke="#8c8c8c" stroke-width=".9" fill="none"/></svg>
<div class="w menu" style="left:782.5px;top:861px;width:32.5px;height:20px;border-radius:0;"></div>
<svg style="left:785px;top:863px" width="16" height="16" viewBox="0 0 16 16"><path d="M1 8H15" stroke="#f0f0f0" stroke-width="1.1"/><path d="M2.6 4.4V11.6M13.4 4.4V11.6" stroke="#f0f0f0" stroke-width="1.3"/><path d="M5.4 5.4V10.6M10.6 5.4V10.6" stroke="#f0f0f0" stroke-width="1.1"/><rect x="6.8" y="3.2" width="2.4" height="9.6" rx="1.2" fill="#3a7af0" stroke="#cfe0ff" stroke-width=".6"/></svg>
<svg style="left:805px;top:864px" width="7" height="14"><path d="M3.5 .2L6.3 5.9H0.7Z M3.5 13.2L6.3 8.2H0.7Z" fill="#cfcfcf"/></svg>
<div class="w reg" style="left:814px;top:861px;width:21px;height:20px;border-radius:0 4.5px 4.5px 0;"></div>
<svg style="left:816.5px;top:863px" width="16" height="16" viewBox="0 0 16 16"><path d="M7.5 3V15.5M12 3V15.5M3 7.5H15.5M3 12H15.5" stroke="#1c1c1c" stroke-width="2.4"/><path d="M7.5 3V15.5M12 3V15.5M3 7.5H15.5M3 12H15.5" stroke="#f4f4f4" stroke-width=".9"/><circle cx="5" cy="4.6" r="4" fill="#e8f0ff" stroke="#2a4a98" stroke-width="1"/><circle cx="5" cy="4.6" r="1.9" fill="#3a6ad8"/></svg>
<div class="w reg" style="left:839.5px;top:861px;width:20.5px;height:20px;border-radius:4.5px 0 0 4.5px;"></div>
<svg style="left:841.5px;top:863px" width="16" height="16" viewBox="0 0 16 16"><rect x="1.5" y="4.5" width="13" height="9.5" rx="1.2" fill="#4a4a4a" stroke="#111" stroke-width="1"/><rect x="3" y="2.8" width="4" height="2" fill="#333" stroke="#111" stroke-width=".6"/><circle cx="8" cy="9.4" r="3.4" fill="#c8c8c8" stroke="#111" stroke-width=".8"/><circle cx="8" cy="9.4" r="1.8" fill="#b03030"/><path d="M12.5 .5L13.3 2.7L15.5 3.5L13.3 4.3L12.5 6.5L11.7 4.3L9.5 3.5L11.7 2.7Z" fill="#ffe050"/></svg>
<div class="w reg" style="left:859px;top:861px;width:20.5px;height:20px;border-radius:0 4.5px 4.5px 0;"></div>
<svg style="left:861.5px;top:863px" width="16" height="16" viewBox="0 0 16 16"><rect x="1.8" y="6.5" width="12.4" height="7.8" fill="#e8e8e8" stroke="#111" stroke-width="1"/><path d="M1.8 6.5L13.6 2.2L14.4 4.4L2.6 8.6Z" fill="#e8e8e8" stroke="#111" stroke-width="1"/><path d="M4 5.8L5.6 7.4M7 4.7L8.6 6.3M10 3.6L11.6 5.2M3 9.2H13M3 11.6H13" stroke="#111" stroke-width="1.2"/></svg>
<div class="a" style="left:0px;top:885px;width:167.4px;height:45px;background:#444444;"></div>
<div class="a" style="left:888.2px;top:885px;width:95.79999999999995px;height:45px;background:#444444;"></div>
<svg style="left:0;top:885px;overflow:hidden" width="984" height="45"><line x1="23.2" y1="0" x2="23.2" y2="46" stroke="#383838" stroke-width="1.2"/><line x1="52.0" y1="0" x2="52.0" y2="46" stroke="#383838" stroke-width="1.2"/><line x1="80.9" y1="0" x2="80.9" y2="46" stroke="#383838" stroke-width="1.2"/><line x1="109.7" y1="0" x2="109.7" y2="46" stroke="#383838" stroke-width="1.2"/><line x1="138.6" y1="0" x2="138.6" y2="46" stroke="#383838" stroke-width="1.2"/><line x1="167.4" y1="0" x2="167.4" y2="46" stroke="#161616" stroke-width="1.2"/><line x1="196.2" y1="0" x2="196.2" y2="46" stroke="#676767" stroke-width="1.2"/><line x1="225.1" y1="0" x2="225.1" y2="46" stroke="#676767" stroke-width="1.2"/><line x1="253.9" y1="0" x2="253.9" y2="46" stroke="#676767" stroke-width="1.2"/><line x1="282.8" y1="0" x2="282.8" y2="46" stroke="#676767" stroke-width="1.2"/><line x1="311.6" y1="0" x2="311.6" y2="46" stroke="#676767" stroke-width="1.2"/><line x1="340.4" y1="0" x2="340.4" y2="46" stroke="#676767" stroke-width="1.2"/><line x1="369.3" y1="0" x2="369.3" y2="46" stroke="#676767" stroke-width="1.2"/><line x1="398.1" y1="0" x2="398.1" y2="46" stroke="#676767" stroke-width="1.2"/><line x1="427.0" y1="0" x2="427.0" y2="46" stroke="#676767" stroke-width="1.2"/><line x1="455.8" y1="0" x2="455.8" y2="46" stroke="#676767" stroke-width="1.2"/><line x1="484.6" y1="0" x2="484.6" y2="46" stroke="#676767" stroke-width="1.2"/><line x1="513.5" y1="0" x2="513.5" y2="46" stroke="#676767" stroke-width="1.2"/><line x1="542.3" y1="0" x2="542.3" y2="46" stroke="#676767" stroke-width="1.2"/><line x1="571.2" y1="0" x2="571.2" y2="46" stroke="#676767" stroke-width="1.2"/><line x1="600.0" y1="0" x2="600.0" y2="46" stroke="#676767" stroke-width="1.2"/><line x1="628.8" y1="0" x2="628.8" y2="46" stroke="#676767" stroke-width="1.2"/><line x1="657.7" y1="0" x2="657.7" y2="46" stroke="#676767" stroke-width="1.2"/><line x1="686.5" y1="0" x2="686.5" y2="46" stroke="#676767" stroke-width="1.2"/><line x1="715.4" y1="0" x2="715.4" y2="46" stroke="#676767" stroke-width="1.2"/><line x1="744.2" y1="0" x2="744.2" y2="46" stroke="#676767" stroke-width="1.2"/><line x1="773.0" y1="0" x2="773.0" y2="46" stroke="#676767" stroke-width="1.2"/><line x1="801.9" y1="0" x2="801.9" y2="46" stroke="#676767" stroke-width="1.2"/><line x1="830.7" y1="0" x2="830.7" y2="46" stroke="#676767" stroke-width="1.2"/><line x1="859.6" y1="0" x2="859.6" y2="46" stroke="#676767" stroke-width="1.2"/><line x1="888.4" y1="0" x2="888.4" y2="46" stroke="#383838" stroke-width="1.2"/><line x1="917.2" y1="0" x2="917.2" y2="46" stroke="#383838" stroke-width="1.2"/><line x1="946.1" y1="0" x2="946.1" y2="46" stroke="#383838" stroke-width="1.2"/><line x1="974.9" y1="0" x2="974.9" y2="46" stroke="#383838" stroke-width="1.2"/></svg>
<div class="a" style="left:168.8px;top:885px;width:3.2px;height:45px;background:#62c83c;"></div>
<svg style="left:972px;top:885px;overflow:hidden" width="12" height="12"><path d="M1 0L12 11M4.5 0L12 7.5M8 0L12 4" stroke="#1c1c1c" stroke-width="1.2" fill="none"/><path d="M1 0L12 11M4.5 0L12 7.5M8 0L12 4" stroke="#b0b0b0" stroke-width="1" fill="none" transform="translate(0,1.2)"/></svg>
<div class="a" style="left:4px;top:931.5px;width:975px;height:12.5px;border-radius:6.5px;border:1px solid #3e3e3e;background:linear-gradient(#919191,#7c7c7c)"></div>
<div class="a" style="left:6px;top:933.5px;width:8.5px;height:8.5px;border-radius:5px;background:#646464"></div>
<div class="a" style="left:969.5px;top:933.5px;width:8.5px;height:8.5px;border-radius:5px;background:#646464"></div>
<div class="t n" style="left:31.5px;top:932px;width:40px;text-align:center">-40</div>
<div class="t n" style="left:89.7px;top:932px;width:40px;text-align:center">-20</div>
<div class="t n" style="left:149.3px;top:932px;width:40px;text-align:center">0</div>
<div class="t n" style="left:206.4px;top:932px;width:40px;text-align:center">20</div>
<div class="t n" style="left:263.5px;top:932px;width:40px;text-align:center">40</div>
<div class="t n" style="left:320.6px;top:932px;width:40px;text-align:center">60</div>
<div class="t n" style="left:377.7px;top:932px;width:40px;text-align:center">80</div>
<div class="t n" style="left:434.8px;top:932px;width:40px;text-align:center">100</div>
<div class="t n" style="left:491.9px;top:932px;width:40px;text-align:center">120</div>
<div class="t n" style="left:549.0px;top:932px;width:40px;text-align:center">140</div>
<div class="t n" style="left:606.1px;top:932px;width:40px;text-align:center">160</div>
<div class="t n" style="left:663.2px;top:932px;width:40px;text-align:center">180</div>
<div class="t n" style="left:720.3px;top:932px;width:40px;text-align:center">200</div>
<div class="t n" style="left:777.4px;top:932px;width:40px;text-align:center">220</div>
<div class="t n" style="left:834.5px;top:932px;width:40px;text-align:center">240</div>
<div class="t n" style="left:891.6px;top:932px;width:40px;text-align:center">260</div>
<div class="a" style="left:0px;top:947.4px;width:984px;height:1.2px;background:#7c7c7c;"></div>
<svg style="left:0px;top:962px;overflow:hidden" width="12" height="12"><path d="M0 1L11 12M0 4.5L7.5 12M0 8L4 12" stroke="#1c1c1c" stroke-width="1.2" fill="none"/><path d="M0 1L11 12M0 4.5L7.5 12M0 8L4 12" stroke="#b0b0b0" stroke-width="1" fill="none" transform="translate(0,1.2)"/></svg>
<div class="w menu" style="left:9px;top:951px;width:32px;height:20px;"></div>
<svg style="left:13px;top:953.0px" width="16" height="16" viewBox="0 0 16 16"><circle cx="8" cy="8" r="6.9" fill="#111"/><circle cx="8" cy="8" r="6" fill="#ececec"/><path d="M8 2A6 6 0 0 0 8 14Z" fill="#d4d4d4" opacity=".6"/><path d="M8 3.2V3.9M8 12.1V12.8M3.2 8H3.9M12.1 8H12.8" stroke="#999" stroke-width=".8"/><path d="M7.6 8.4L10.8 4.8" stroke="#333" stroke-width="1"/><path d="M7.2 8.2L10 11" stroke="#e01010" stroke-width="1.5"/></svg>
<svg style="left:30.5px;top:954.2px" width="7" height="14"><path d="M3.5 .2L6.3 5.9H0.7Z M3.5 13.2L6.3 8.2H0.7Z" fill="#cfcfcf"/></svg>
<div class="t" style="left:53.5px;top:955.5px;">View</div>
<div class="t" style="left:98.5px;top:955.5px;">Marker</div>
<div class="t" style="left:153.5px;top:955.5px;">Frame</div>
<div class="t" style="left:205.5px;top:955.5px;">Playback</div>
<div class="w reg" style="left:263px;top:951px;width:20px;height:20px;border-radius:4.5px 0 0 4.5px;"></div>
<svg style="left:265px;top:953px" width="16" height="16" viewBox="0 0 16 16"><circle cx="7.9" cy="7.9" r="6.5" fill="#f2f2f2" stroke="#0c0c0c" stroke-width="1.2"/><path d="M7.9 7.9A6 6 0 0 0 2.4 5.6" fill="none"/><path d="M7.9 7.9V2A5.9 5.9 0 0 1 13.8 7.9Z" fill="#fba40c"/><path d="M7.9 2.2V7.9" stroke="#e8e8e8" stroke-width=".6"/><path d="M7.6 7.6H13.6" stroke="#111" stroke-width="1.1"/><path d="M7.9 8L10.3 10.6" stroke="#e01020" stroke-width="1.5" stroke-linecap="round"/><path d="M3.2 8.4h.8M8 12h.1" stroke="#aaa" stroke-width=".8"/></svg>
<div class="w reg" style="left:282px;top:951px;width:20.5px;height:20px;border-radius:0 4.5px 4.5px 0;"></div>
<svg style="left:285.4px;top:953px" width="16" height="16" viewBox="0 0 16 16"><path d="M5 8V5.2A3 3 0 0 1 11 5.2V8" fill="none" stroke="#0c0c0c" stroke-width="3.2"/><path d="M5 8V5.2A3 3 0 0 1 11 5.2V8" fill="none" stroke="#f4f4f4" stroke-width="1.4"/><rect x="3" y="7.8" width="10" height="6.8" rx=".8" fill="#f4f4f4" stroke="#0c0c0c" stroke-width="1.1"/><path d="M4 10H12M4 12.2H12" stroke="#b4bccc" stroke-width=".8"/><rect x="7.4" y="9.6" width="1.3" height="2.8" rx=".6" fill="#111"/></svg>
<div class="w num" style="left:308px;top:951px;width:116.5px;height:20px;border-radius:10px 0 0 10px;"></div>
<div class="t" style="left:324px;top:955.5px;">Start:</div>
<div class="t n" style="left:308px;top:955.5px;width:101.5px;text-align:right">1</div>
<svg style="left:313px;top:958px" width="4" height="6"><path d="M3.6 0V6L0 3Z" fill="#747474"/></svg>
<svg style="left:415.5px;top:958px" width="4" height="6"><path d="M.4 0V6L4 3Z" fill="#747474"/></svg>
<div class="w num" style="left:423.5px;top:951px;width:112.5px;height:20px;border-radius:0 10px 10px 0;"></div>
<div class="t" style="left:439.5px;top:955.5px;">End:</div>
<div class="t n" style="left:423.5px;top:955.5px;width:97.5px;text-align:right">250</div>
<svg style="left:428.5px;top:958px" width="4" height="6"><path d="M3.6 0V6L0 3Z" fill="#747474"/></svg>
<svg style="left:527.0px;top:958px" width="4" height="6"><path d="M.4 0V6L4 3Z" fill="#747474"/></svg>
<div class="w num" style="left:541.5px;top:951px;width:89.5px;height:20px;"></div>
<div class="t n" style="left:541.5px;top:955.5px;width:74.5px;text-align:right">1</div>
<svg style="left:546.5px;top:958px" width="4" height="6"><path d="M3.6 0V6L0 3Z" fill="#747474"/></svg>
<svg style="left:622.0px;top:958px" width="4" height="6"><path d="M.4 0V6L4 3Z" fill="#747474"/></svg>
<div class="w reg" style="left:647px;top:951px;width:21px;height:20px;border-radius:4.5px 0 0 4.5px;"></div>
<svg style="left:649.2px;top:953px" width="16" height="16" viewBox="0 0 16 16"><rect x="2" y="3.2" width="2" height="9.6" fill="#fff" stroke="#111" stroke-width=".9"/><path d="M9.4 8L14 3.5V12.5ZM4.8 8L9.4 3.5V12.5Z" fill="#fff" stroke="#111" stroke-width=".9"/></svg>
<div class="w reg" style="left:667px;top:951px;width:20.5px;height:20px;border-radius:0;"></div>
<svg style="left:669.2px;top:953px" width="16" height="16" viewBox="0 0 16 16"><path d="M8 8L13.5 3.5V12.5ZM2 8L7.5 3.5V12.5Z" fill="#fff" stroke="#111" stroke-width=".9"/></svg>
<div class="w reg" style="left:686.5px;top:951px;width:21.0px;height:20px;border-radius:0;"></div>
<svg style="left:688.7px;top:953px" width="16" height="16" viewBox="0 0 16 16"><path d="M2.5 8L13 2V14Z" fill="#fff" stroke="#111" stroke-width="1"/></svg>
<div class="w reg" style="left:706.5px;top:951px;width:21.0px;height:20px;border-radius:0;"></div>
<svg style="left:708.7px;top:953px" width="16" height="16" viewBox="0 0 16 16"><path d="M13.5 8L3 2V14Z" fill="#fff" stroke="#111" stroke-width="1"/></svg>
<div class="w reg" style="left:726.5px;top:951px;width:20.5px;height:20px;border-radius:0;"></div>
<svg style="left:728.7px;top:953px" width="16" height="16" viewBox="0 0 16 16"><path d="M8 8L2.5 3.5V12.5ZM14 8L8.5 3.5V12.5Z" fill="#fff" stroke="#111" stroke-width=".9"/></svg>
<div class="w reg" style="left:746px;top:951px;width:21px;height:20px;border-radius:0 4.5px 4.5px 0;"></div>
<svg style="left:748.2px;top:953px" width="16" height="16" viewBox="0 0 16 16"><rect x="12" y="3.2" width="2" height="9.6" fill="#fff" stroke="#111" stroke-width=".9"/><path d="M6.6 8L2 3.5V12.5ZM11.2 8L6.6 3.5V12.5Z" fill="#fff" stroke="#111" stroke-width=".9"/></svg>
<div class="w menu" style="left:772px;top:951px;width:115px;height:20px;"><span class="t" style="top:3.5px;left:7px;">No Sync</span></div>
<svg style="left:876.5px;top:954.2px" width="7" height="14"><path d="M3.5 .2L6.3 5.9H0.7Z M3.5 13.2L6.3 8.2H0.7Z" fill="#cfcfcf"/></svg>
<div class="w reg" style="left:903.5px;top:951px;width:19.5px;height:20px;"></div>
<svg style="left:905.2px;top:953px" width="16" height="16" viewBox="0 0 16 16"><circle cx="8" cy="8" r="4.6" fill="#e03410" stroke="#f4e8e4" stroke-width="1.1"/><circle cx="8" cy="8" r="5.6" fill="none" stroke="#6a2a20" stroke-width=".5"/><circle cx="7" cy="6.8" r="1.5" fill="#ff8a68" opacity=".7"/></svg>
<div class="w menu" style="left:928.5px;top:951px;width:31px;height:20px;"></div>
<svg style="left:932px;top:953px" width="16" height="16" viewBox="0 0 16 16"><path d="M8 2.2L13.8 8L8 13.8L2.2 8Z" fill="#ffb81c" stroke="#3a2a00" stroke-width="1"/></svg>
<svg style="left:949.5px;top:954px" width="7" height="14"><path d="M3.5 .2L6.3 5.9H0.7Z M3.5 13.2L6.3 8.2H0.7Z" fill="#cfcfcf"/></svg>
<div class="a" style="left:966px;top:951px;width:18px;height:20px;overflow:hidden"><div class="w reg" style="left:0;top:0;width:40px;height:20px"></div><svg style="left:2px;top:1.7px" width="16" height="16" viewBox="0 0 16 16"><circle cx="4.6" cy="12" r="2.8" fill="none" stroke="#f0e080" stroke-width="1.6"/><circle cx="4.6" cy="12" r="3.8" fill="none" stroke="#3a3010" stroke-width=".6"/><path d="M5 9V1.5H8.4M5 4.6H7.6" stroke="#3a3010" stroke-width="2.6" fill="none"/><path d="M5 9V1.5H8.4M5 4.6H7.6" stroke="#f0e080" stroke-width="1.4" fill="none"/><path d="M8 12L15 6" stroke="#333" stroke-width="3"/><path d="M8 12L15 6" stroke="#eee" stroke-width="1.6"/></svg></div>
<div class="a" style="left:15px;top:969px;width:24px;height:14px;border-radius:50%;background:radial-gradient(ellipse at 50% 60%,#f4f8fb,#cddde8);border:1.2px solid #1c5c9c"></div>
<div class="a" style="left:986.6px;top:54px;width:293.4px;height:1px;background:#5c5c5c;"></div>
<div class="a" style="left:986.6px;top:55px;width:293.4px;height:1px;background:#858585;"></div>
<div class="w menu" style="left:994px;top:32px;width:32px;height:20px;"></div>
<svg style="left:998px;top:34.0px" width="16" height="16" viewBox="0 0 16 16"><rect x=".6" y=".6" width="7.2" height="3" rx=".6" fill="#f49a1c" stroke="#3a2200" stroke-width=".9"/><path d="M1.6 1.6H6.6" stroke="#ffe4b0" stroke-width=".9"/><path d="M3.5 3.8V13.6H7.6M3.5 8.5H7.6" stroke="#8a9cc4" stroke-width="1.2" fill="none"/><rect x="7.6" y="6.6" width="6.8" height="2.8" rx=".5" fill="#fafafa" stroke="#222" stroke-width=".8"/><rect x="7.6" y="12.2" width="6.8" height="2.8" rx=".5" fill="#fafafa" stroke="#222" stroke-width=".8"/></svg>
<svg style="left:1015.5px;top:35.2px" width="7" height="14"><path d="M3.5 .2L6.3 5.9H0.7Z M3.5 13.2L6.3 8.2H0.7Z" fill="#cfcfcf"/></svg>
<div class="t" style="left:1038.5px;top:36.5px;">View</div>
<div class="t" style="left:1083.5px;top:36.5px;">Search</div>
<div class="w menu" style="left:1130px;top:32px;width:119px;height:20px;"><span class="t" style="top:3.5px;left:7px;">All Scenes</span></div>
<svg style="left:1238.5px;top:35.2px" width="7" height="14"><path d="M3.5 .2L6.3 5.9H0.7Z M3.5 13.2L6.3 8.2H0.7Z" fill="#cfcfcf"/></svg>
<div class="a" style="left:1254px;top:32px;width:26px;height:20px;overflow:hidden"><div class="w reg" style="left:0;top:0;width:40px;height:20px;background:linear-gradient(#b4b4b4,#9c9c9c)"></div><svg style="left:4px;top:2px" width="18" height="16" viewBox="0 0 16 16"><circle cx="9.5" cy="6" r="4.6" fill="#e8eef8" stroke="#3a3a3a" stroke-width="1.2"/><circle cx="8.4" cy="4.8" r="1.8" fill="#fff"/><path d="M6 9.5L1.5 14.5" stroke="#6a3a1a" stroke-width="2.6" stroke-linecap="round"/><path d="M6 9.5L1.5 14.5" stroke="#d89a6a" stroke-width="1.2" stroke-linecap="round"/></svg></div>
<svg style="left:1268px;top:29px;overflow:hidden" width="12" height="12"><path d="M1 0L12 11M4.5 0L12 7.5M8 0L12 4" stroke="#1c1c1c" stroke-width="1.2" fill="none"/><path d="M1 0L12 11M4.5 0L12 7.5M8 0L12 4" stroke="#b0b0b0" stroke-width="1" fill="none" transform="translate(0,1.2)"/></svg>
<div class="a" style="left:986px;top:76px;width:294px;height:20px;background:#787878;"></div>
<div class="a" style="left:986px;top:116px;width:294px;height:20px;background:#787878;"></div>
<div class="a" style="left:986px;top:156px;width:294px;height:20px;background:#787878;"></div>
<div class="a" style="left:986.6px;top:56px;width:234.4px;height:20px;background:#868b90;"></div>
<div class="a" style="left:1221px;top:56px;width:1px;height:117px;background:#5c5c5c;"></div>
<div class="a" style="left:1241px;top:56px;width:1px;height:117px;background:#5c5c5c;"></div>
<div class="a" style="left:1261px;top:56px;width:1px;height:117px;background:#5c5c5c;"></div>
<svg style="left:986px;top:56px" width="100" height="90"><path d="M14 10.5H22M29.5 18V70.5M34 70.5H42" stroke="#2a2a2a" stroke-width="1" fill="none"/></svg>
<svg style="left:991.0px;top:62.0px" width="9" height="9"><circle cx="4.5" cy="4.5" r="3.8" fill="#e8e8e8" stroke="#1a1a1a" stroke-width="1"/><path d="M2.4 4.5H6.6" stroke="#111" stroke-width="1.1"/></svg>
<div class="a" style="left:1007px;top:57px;width:18px;height:18px;border-radius:9px;background:rgba(255,255,255,.28)"></div>
<svg style="left:1008px;top:58px" width="16" height="16" viewBox="0 0 16 16"><defs><linearGradient id="gcy" x1="0" y1="0" x2="1" y2="0"><stop offset="0" stop-color="#e8f0ff"/><stop offset=".35" stop-color="#9ab8ec"/><stop offset=".7" stop-color="#3a6ac4"/><stop offset="1" stop-color="#2a52a8"/></linearGradient><radialGradient id="gsp" cx=".38" cy=".35" r=".75"><stop offset="0" stop-color="#fff"/><stop offset=".6" stop-color="#e4e4e4"/><stop offset="1" stop-color="#8a8a8a"/></radialGradient></defs><circle cx="3.4" cy="3" r="2.9" fill="#e8e070" opacity=".25"/><circle cx="3.4" cy="3" r="1.7" fill="#fff" stroke="#c4bc2c" stroke-width="1.1"/><rect x="7.7" y="1.3" width="5.9" height="10.2" rx="2.4" ry="1.6" fill="url(#gcy)" stroke="#16306c" stroke-width="1"/><ellipse cx="10.6" cy="2.9" rx="2.3" ry="1.1" fill="#eef4ff" opacity=".9"/><circle cx="6.4" cy="10.9" r="3.7" fill="url(#gsp)" stroke="#0c0c0c" stroke-width="1"/></svg>
<div class="t" style="left:1028px;top:60.5px;">Scene</div>
<svg style="left:1011.0px;top:82.0px" width="9" height="9"><circle cx="4.5" cy="4.5" r="3.8" fill="#e8e8e8" stroke="#1a1a1a" stroke-width="1"/><path d="M2.4 4.5H6.6" stroke="#111" stroke-width="1.1"/><path d="M4.5 2.4V6.6" stroke="#111" stroke-width="1.1"/></svg>
<svg style="left:1028px;top:78px" width="16" height="16" viewBox="0 0 16 16"><path d="M11 2.8L15.6 4.2L13.2 15.7L3 13L3.4 11Z" fill="#f3eed8" stroke="#111" stroke-width="1" stroke-linejoin="round"/><path d="M11.8 4.2L12.6 11.6L4 12.4" stroke="#8a7a30" stroke-width="1.2" fill="none" opacity=".8"/><rect x=".6" y=".6" width="10.9" height="10.9" rx=".6" fill="#fff" stroke="#111" stroke-width="1.2"/><rect x="2" y="1.7" width="7.9" height="8.5" fill="#c6d3e6"/><rect x="5.2" y="1.7" width="3.7" height="6" rx="1.3" fill="#3d6bd0" stroke="#14306c" stroke-width=".7"/><rect x="6.1" y="2.3" width="1.9" height=".9" fill="#e8f0ff"/><circle cx="4.3" cy="8.2" r="1.9" fill="#fafafa" stroke="#1a1a1a" stroke-width=".8"/><ellipse cx="2.7" cy="2.5" rx="1.4" ry="1" fill="#e8b818" transform="rotate(-30 2.7 2.5)"/></svg>
<div class="t" style="left:1048.5px;top:80.5px;">RenderLayers</div>
<div class="a" style="left:1126.5px;top:80px;width:1.5px;height:12px;background:#2a2a2a;"></div>
<div class="a" style="left:1137px;top:77.5px;width:18px;height:18px;border-radius:9px;background:rgba(255,255,255,.25)"></div>
<svg style="left:1138px;top:78px" width="16" height="16" viewBox="0 0 16 16"><path d="M11 2.8L15.6 4.2L13.2 15.7L3 13L3.4 11Z" fill="#f3eed8" stroke="#111" stroke-width="1" stroke-linejoin="round"/><path d="M11.8 4.2L12.6 11.6L4 12.4" stroke="#8a7a30" stroke-width="1.2" fill="none" opacity=".8"/><rect x=".6" y=".6" width="10.9" height="10.9" rx=".6" fill="#fff" stroke="#111" stroke-width="1.2"/><rect x="2" y="1.7" width="7.9" height="8.5" fill="#c6d3e6"/><rect x="5.2" y="1.7" width="3.7" height="6" rx="1.3" fill="#3d6bd0" stroke="#14306c" stroke-width=".7"/><rect x="6.1" y="2.3" width="1.9" height=".9" fill="#e8f0ff"/><circle cx="4.3" cy="8.2" r="1.9" fill="#fafafa" stroke="#1a1a1a" stroke-width=".8"/><ellipse cx="2.7" cy="2.5" rx="1.4" ry="1" fill="#e8b818" transform="rotate(-30 2.7 2.5)"/></svg>
<div class="a" style="left:1027px;top:97px;width:18px;height:18px;border-radius:9px;background:rgba(200,200,255,.3)"></div>
<svg style="left:1028px;top:98px" width="16" height="16" viewBox="0 0 16 16"><defs><radialGradient id="gwo" cx=".35" cy=".3" r=".8"><stop offset="0" stop-color="#7aa0dc"/><stop offset=".5" stop-color="#3a62aa"/><stop offset="1" stop-color="#1c3468"/></radialGradient></defs><circle cx="8" cy="8" r="6.4" fill="url(#gwo)" stroke="#1a2444" stroke-width=".9"/><path d="M3.6 5.4C4.6 3.2 7 2.6 8.2 3.4C9.2 4.4 7.6 5.8 6.8 7C5.8 8.2 4.2 7.8 3.6 5.4ZM9.2 8C10.6 7 13.2 7.4 13.2 9.4C13.2 11.4 11.2 13 9.8 12.6C8.6 12 8.2 9 9.2 8Z" fill="#4f7f38"/><ellipse cx="6" cy="4.8" rx="2.6" ry="1.6" fill="#fff" opacity=".3"/></svg>
<div class="t" style="left:1048.5px;top:100.5px;">World</div>
<svg style="left:1011.0px;top:122.0px" width="9" height="9"><circle cx="4.5" cy="4.5" r="3.8" fill="#e8e8e8" stroke="#1a1a1a" stroke-width="1"/><path d="M2.4 4.5H6.6" stroke="#111" stroke-width="1.1"/><path d="M4.5 2.4V6.6" stroke="#111" stroke-width="1.1"/></svg>
<div class="a" style="left:1027px;top:117px;width:18px;height:18px;border-radius:9px;background:#c8955a"></div>
<svg style="left:1028px;top:118px" width="16" height="16" viewBox="0 0 16 16"><path d="M2.5 3.5H13.5L8 13.5Z" fill="none" stroke="#f47a10" stroke-width="1.6" stroke-linejoin="round"/><path d="M2.5 3.5H13.5L8 13.5Z" fill="none" stroke="#fff" stroke-width=".6"/><circle cx="2.5" cy="3.5" r="1.3" fill="#fff"/><circle cx="13.5" cy="3.5" r="1.3" fill="#fff"/><circle cx="8" cy="13.5" r="1.3" fill="#fff"/></svg>
<div class="t tw" style="left:1048.5px;top:120.5px;">Sphere</div>
<div class="a" style="left:1092.5px;top:120px;width:1.5px;height:12px;background:#2a2a2a;"></div>
<svg style="left:1104px;top:118px" width="16" height="16" viewBox="0 0 16 16"><path d="M2.5 3.5H13.5L8 13.5Z" fill="none" stroke="#3a3a3a" stroke-width="2"/><path d="M2.5 3.5H13.5L8 13.5Z" fill="none" stroke="#b8b8b8" stroke-width="1"/><rect x="1.2" y="2.2" width="2.6" height="2.6" fill="#f4f4f4" stroke="#222" stroke-width=".7"/><rect x="12.2" y="2.2" width="2.6" height="2.6" fill="#f4f4f4" stroke="#222" stroke-width=".7"/><rect x="6.7" y="12" width="2.6" height="2.6" fill="#f4f4f4" stroke="#222" stroke-width=".7"/></svg>
<svg style="left:1223px;top:118px" width="16" height="16" viewBox="0 0 16 16"><path d="M1 8C4 3.5 12 3.5 15 8C12 12.5 4 12.5 1 8Z" fill="#f4f4f4" stroke="#222" stroke-width="1"/><circle cx="8" cy="8" r="2.6" fill="#222"/><circle cx="7.2" cy="7.2" r=".9" fill="#fff"/></svg>
<svg style="left:1243px;top:118px" width="16" height="16" viewBox="0 0 16 16"><path d="M4 1.5V12.5L6.8 10L9 14.5L10.8 13.6L8.6 9.4H12Z" fill="#f4f4f4" stroke="#111" stroke-width="1"/></svg>
<svg style="left:1262.5px;top:118px" width="16" height="16" viewBox="0 0 16 16"><rect x="1.5" y="4.5" width="13" height="9.5" rx="1" fill="#c8c8c8" stroke="#111" stroke-width="1"/><rect x="2.5" y="8" width="11" height="5" fill="#6a6a6a"/><rect x="3" y="2.8" width="3.6" height="2" fill="#d8d8d8" stroke="#111" stroke-width=".7"/><circle cx="3.8" cy="6.4" r=".9" fill="#e01010"/><circle cx="9" cy="9.6" r="3.5" fill="#2a2a30" stroke="#e0e0e0" stroke-width=".8"/><circle cx="9" cy="9.6" r="2" fill="#7a3a3a"/><circle cx="8.2" cy="8.8" r="1" fill="#4a6ab0"/></svg>
<div class="a" style="left:989px;top:175px;width:286px;height:13px;border-radius:6.5px;background:#5a5a5a;border:1px solid #505050"></div>
<div class="a" style="left:989px;top:175px;width:280.5px;height:13px;border-radius:6.5px;border:1px solid #3c3c3c;background:linear-gradient(#909090,#7a7a7a)"></div>
<svg style="left:986.5px;top:178px;overflow:hidden" width="12" height="12"><path d="M0 1L11 12M0 4.5L7.5 12M0 8L4 12" stroke="#1c1c1c" stroke-width="1.2" fill="none"/><path d="M0 1L11 12M0 4.5L7.5 12M0 8L4 12" stroke="#b0b0b0" stroke-width="1" fill="none" transform="translate(0,1.2)"/></svg>
<svg style="left:1268px;top:193px;overflow:hidden" width="12" height="12"><path d="M1 0L12 11M4.5 0L12 7.5M8 0L12 4" stroke="#1c1c1c" stroke-width="1.2" fill="none"/><path d="M1 0L12 11M4.5 0L12 7.5M8 0L12 4" stroke="#b0b0b0" stroke-width="1" fill="none" transform="translate(0,1.2)"/></svg>
<div class="w menu" style="left:994px;top:196px;width:32px;height:20px;"></div>
<svg style="left:998px;top:198.0px" width="16" height="16" viewBox="0 0 16 16"><rect x=".7" y="1.7" width="13.4" height="4.6" rx="2.2" fill="#6c6c6c" stroke="#111" stroke-width="1.1"/><rect x="1.6" y="2.5" width="11.6" height="3" rx="1.5" fill="none" stroke="#c8c8c8" stroke-width=".7"/><rect x="8.6" y="2.3" width="4.8" height="3.4" rx="1.4" fill="#f4f4f4"/><rect x=".7" y="8.8" width="13.4" height="5.2" rx="2.4" fill="#fafafa" stroke="#111" stroke-width="1.1"/><rect x="5" y="9.9" width="5.4" height="3" fill="#c6c6c6"/><path d="M4 9.8L2.2 11.4L4 13ZM10.9 9.8L12.7 11.4L10.9 13Z" fill="#111"/></svg>
<svg style="left:1015.5px;top:199.2px" width="7" height="14"><path d="M3.5 .2L6.3 5.9H0.7Z M3.5 13.2L6.3 8.2H0.7Z" fill="#cfcfcf"/></svg>
<div class="w reg" style="left:1034px;top:196px;width:240px;height:20px;background:linear-gradient(#5a5a5a,#464646);border-color:#1c1c1c"></div>
<svg style="left:1035.3px;top:198px;opacity:.72" width="16" height="16" viewBox="0 0 16 16"><rect x="1.5" y="4.5" width="13" height="9.5" rx="1" fill="#c8c8c8" stroke="#111" stroke-width="1"/><rect x="2.5" y="8" width="11" height="5" fill="#6a6a6a"/><rect x="3" y="2.8" width="3.6" height="2" fill="#d8d8d8" stroke="#111" stroke-width=".7"/><circle cx="3.8" cy="6.4" r=".9" fill="#e01010"/><circle cx="9" cy="9.6" r="3.5" fill="#2a2a30" stroke="#e0e0e0" stroke-width=".8"/><circle cx="9" cy="9.6" r="2" fill="#7a3a3a"/><circle cx="8.2" cy="8.8" r="1" fill="#4a6ab0"/></svg>
<div class="a" style="left:1052.8px;top:197px;width:1px;height:18px;background:#242424;"></div>
<svg style="left:1055.3px;top:198px;opacity:.72" width="16" height="16" viewBox="0 0 16 16"><path d="M11 2.8L15.6 4.2L13.2 15.7L3 13L3.4 11Z" fill="#f3eed8" stroke="#111" stroke-width="1" stroke-linejoin="round"/><path d="M11.8 4.2L12.6 11.6L4 12.4" stroke="#8a7a30" stroke-width="1.2" fill="none" opacity=".8"/><rect x=".6" y=".6" width="10.9" height="10.9" rx=".6" fill="#fff" stroke="#111" stroke-width="1.2"/><rect x="2" y="1.7" width="7.9" height="8.5" fill="#c6d3e6"/><rect x="5.2" y="1.7" width="3.7" height="6" rx="1.3" fill="#3d6bd0" stroke="#14306c" stroke-width=".7"/><rect x="6.1" y="2.3" width="1.9" height=".9" fill="#e8f0ff"/><circle cx="4.3" cy="8.2" r="1.9" fill="#fafafa" stroke="#1a1a1a" stroke-width=".8"/><ellipse cx="2.7" cy="2.5" rx="1.4" ry="1" fill="#e8b818" transform="rotate(-30 2.7 2.5)"/></svg>
<div class="a" style="left:1073.3px;top:197px;width:20px;height:18px;background:linear-gradient(#6592dc,#557fc6);"></div>
<div class="a" style="left:1072.8px;top:197px;width:1px;height:18px;background:#242424;"></div>
<svg style="left:1075.3px;top:198px" width="16" height="16" viewBox="0 0 16 16"><defs><linearGradient id="gcy" x1="0" y1="0" x2="1" y2="0"><stop offset="0" stop-color="#e8f0ff"/><stop offset=".35" stop-color="#9ab8ec"/><stop offset=".7" stop-color="#3a6ac4"/><stop offset="1" stop-color="#2a52a8"/></linearGradient><radialGradient id="gsp" cx=".38" cy=".35" r=".75"><stop offset="0" stop-color="#fff"/><stop offset=".6" stop-color="#e4e4e4"/><stop offset="1" stop-color="#8a8a8a"/></radialGradient></defs><circle cx="3.4" cy="3" r="2.9" fill="#e8e070" opacity=".25"/><circle cx="3.4" cy="3" r="1.7" fill="#fff" stroke="#c4bc2c" stroke-width="1.1"/><rect x="7.7" y="1.3" width="5.9" height="10.2" rx="2.4" ry="1.6" fill="url(#gcy)" stroke="#16306c" stroke-width="1"/><ellipse cx="10.6" cy="2.9" rx="2.3" ry="1.1" fill="#eef4ff" opacity=".9"/><circle cx="6.4" cy="10.9" r="3.7" fill="url(#gsp)" stroke="#0c0c0c" stroke-width="1"/></svg>
<div class="a" style="left:1092.8px;top:197px;width:1px;height:18px;background:#242424;"></div>
<svg style="left:1095.3px;top:198px;opacity:.72" width="16" height="16" viewBox="0 0 16 16"><defs><radialGradient id="gwo" cx=".35" cy=".3" r=".8"><stop offset="0" stop-color="#7aa0dc"/><stop offset=".5" stop-color="#3a62aa"/><stop offset="1" stop-color="#1c3468"/></radialGradient></defs><circle cx="8" cy="8" r="6.4" fill="url(#gwo)" stroke="#1a2444" stroke-width=".9"/><path d="M3.6 5.4C4.6 3.2 7 2.6 8.2 3.4C9.2 4.4 7.6 5.8 6.8 7C5.8 8.2 4.2 7.8 3.6 5.4ZM9.2 8C10.6 7 13.2 7.4 13.2 9.4C13.2 11.4 11.2 13 9.8 12.6C8.6 12 8.2 9 9.2 8Z" fill="#4f7f38"/><ellipse cx="6" cy="4.8" rx="2.6" ry="1.6" fill="#fff" opacity=".3"/></svg>
<div class="a" style="left:1112.8px;top:197px;width:1px;height:18px;background:#242424;"></div>
<svg style="left:1115.3px;top:198px;opacity:.72" width="16" height="16" viewBox="0 0 16 16"><path d="M7.8 1.9L13.7 4.5V11.4L7.8 14.7L1.9 11.4V4.5Z" fill="#e99a3e" stroke="#2a1604" stroke-width="1.3" stroke-linejoin="round"/><path d="M7.8 1.9L13.7 4.5L7.8 7.4L1.9 4.5Z" fill="#fbd8a8"/><path d="M7.8 7.4L13.7 4.5V11.4L7.8 14.7Z" fill="#c67a24"/><path d="M2.8 5.2V11M2.4 4.8L7.8 7.5L13.2 4.8" stroke="#fff" stroke-width="1" fill="none" opacity=".9"/><path d="M7.8 7.8V14.2" stroke="#f4c080" stroke-width=".8" opacity=".8"/></svg>
<div class="a" style="left:1132.8px;top:197px;width:1px;height:18px;background:#242424;"></div>
<svg style="left:1135.3px;top:198px;opacity:.72" width="16" height="16" viewBox="0 0 16 16"><path d="M6.5 9.5L9.5 6.5" stroke="#666" stroke-width="1.6"/><rect x="1.5" y="7.5" width="7" height="5" rx="2.5" fill="none" stroke="#4a4a4a" stroke-width="2.4" transform="rotate(-45 5 10)"/><rect x="1.5" y="7.5" width="7" height="5" rx="2.5" fill="none" stroke="#bdbdbd" stroke-width="1.1" transform="rotate(-45 5 10)"/><rect x="7.5" y="3.5" width="7" height="5" rx="2.5" fill="none" stroke="#4a4a4a" stroke-width="2.4" transform="rotate(-45 11 6)"/><rect x="7.5" y="3.5" width="7" height="5" rx="2.5" fill="none" stroke="#bdbdbd" stroke-width="1.1" transform="rotate(-45 11 6)"/></svg>
<div class="a" style="left:1152.8px;top:197px;width:1px;height:18px;background:#242424;"></div>
<svg style="left:1155.3px;top:198px;opacity:.72" width="16" height="16" viewBox="0 0 16 16"><path d="M2.6 13.4L9 7" stroke="#1c3468" stroke-width="4" stroke-linecap="round"/><path d="M13.9 6.2A3.9 3.9 0 1 1 9.8 2.1L9.4 4.6L11.4 6.6Z" fill="#7ea2e4" stroke="#1c3468" stroke-width="1" stroke-linejoin="round"/><path d="M2.6 13.4L9.4 6.6" stroke="#7ea2e4" stroke-width="2.2" stroke-linecap="round"/></svg>
<div class="a" style="left:1172.8px;top:197px;width:1px;height:18px;background:#242424;"></div>
<svg style="left:1175.3px;top:198px;opacity:.72" width="16" height="16" viewBox="0 0 16 16"><path d="M2.5 3.5H13.5L8 13.5Z" fill="none" stroke="#3a3a3a" stroke-width="2"/><path d="M2.5 3.5H13.5L8 13.5Z" fill="none" stroke="#b8b8b8" stroke-width="1"/><rect x="1.2" y="2.2" width="2.6" height="2.6" fill="#f4f4f4" stroke="#222" stroke-width=".7"/><rect x="12.2" y="2.2" width="2.6" height="2.6" fill="#f4f4f4" stroke="#222" stroke-width=".7"/><rect x="6.7" y="12" width="2.6" height="2.6" fill="#f4f4f4" stroke="#222" stroke-width=".7"/></svg>
<div class="a" style="left:1192.8px;top:197px;width:1px;height:18px;background:#242424;"></div>
<svg style="left:1195.3px;top:198px;opacity:.72" width="16" height="16" viewBox="0 0 16 16"><circle cx="8" cy="8" r="6.2" fill="#b0b0b0" stroke="#333" stroke-width=".8"/><path d="M8 8V1.8A6.2 6.2 0 0 1 14.2 8Z" fill="#6a6a6a"/><path d="M8 8H1.8A6.2 6.2 0 0 0 8 14.2Z" fill="#d08a7a"/><circle cx="6" cy="5.6" r="2" fill="#fff" opacity=".5"/></svg>
<div class="a" style="left:1212.8px;top:197px;width:1px;height:18px;background:#242424;"></div>
<svg style="left:1215.3px;top:198px;opacity:.72" width="16" height="16" viewBox="0 0 16 16"><rect x="2" y="2" width="12" height="12" fill="#ececec" stroke="#333" stroke-width=".7"/><path d="M2 2h3v3h-3zM8 2h3v3h-3zM5 5h3v3h-3zM11 5h3v3h-3zM2 8h3v3h-3zM8 8h3v3h-3zM5 11h3v3h-3zM11 11h3v3h-3z" fill="#9c2a2a"/></svg>
<div class="a" style="left:1232.8px;top:197px;width:1px;height:18px;background:#242424;"></div>
<svg style="left:1235.3px;top:198px;opacity:.72" width="16" height="16" viewBox="0 0 16 16"><g fill="#fffbe0" stroke="#b8a030" stroke-width=".5"><path d="M4.2 .6L5 3.4L7.8 4.2L5 5L4.2 7.8L3.4 5L.6 4.2L3.4 3.4Z"/><path d="M11.6 1.4L12.5 4.5L15.6 5.4L12.5 6.3L11.6 9.4L10.7 6.3L7.6 5.4L10.7 4.5Z"/><path d="M5.6 8L6.5 11.1L9.6 12L6.5 12.9L5.6 16L4.7 12.9L1.6 12L4.7 11.1Z"/><path d="M12 10L12.6 12L14.6 12.6L12.6 13.2L12 15.2L11.4 13.2L9.4 12.6L11.4 12Z"/></g></svg>
<div class="a" style="left:1252.8px;top:197px;width:1px;height:18px;background:#242424;"></div>
<svg style="left:1255.3px;top:198px;opacity:.72" width="16" height="16" viewBox="0 0 16 16"><path d="M1.5 6.5L5.6 12L11 4.5" stroke="#1c3060" stroke-width="3.4" fill="none"/><path d="M1.5 6.5L5.6 12L11 4.5" stroke="#4a70b4" stroke-width="2" fill="none"/><circle cx="12" cy="4" r="3.3" fill="url(#gsp)" stroke="#444" stroke-width=".7"/></svg>
<svg style="left:995px;top:229px" width="16" height="16" viewBox="0 0 16 16"><path d="M0.5 15.5L5.8 10.2" stroke="#111" stroke-width="2.4" stroke-linecap="round"/><path d="M0.8 15.2L5.8 10.2" stroke="#e8e8e8" stroke-width="1"/><path d="M2.2 6.2L9.8 13.8L9.7 9.5L12.2 7L13.4 7.9L15.8 5.5L10.5 0.2L8.1 2.6L9.1 3.9L6.6 6.4Z" fill="#e4e4e4" stroke="#111" stroke-width="1" stroke-linejoin="round"/><path d="M4 6.8L9 11.8L9 9.2L6.8 7Z" fill="#fff" opacity=".7"/><path d="M9.8 5L11.8 7" stroke="#9a9a9a" stroke-width="1"/></svg>
<svg style="left:1015.5px;top:229px" width="16" height="16" viewBox="0 0 16 16"><defs><linearGradient id="gcy" x1="0" y1="0" x2="1" y2="0"><stop offset="0" stop-color="#e8f0ff"/><stop offset=".35" stop-color="#9ab8ec"/><stop offset=".7" stop-color="#3a6ac4"/><stop offset="1" stop-color="#2a52a8"/></linearGradient><radialGradient id="gsp" cx=".38" cy=".35" r=".75"><stop offset="0" stop-color="#fff"/><stop offset=".6" stop-color="#e4e4e4"/><stop offset="1" stop-color="#8a8a8a"/></radialGradient></defs><circle cx="3.4" cy="3" r="2.9" fill="#e8e070" opacity=".25"/><circle cx="3.4" cy="3" r="1.7" fill="#fff" stroke="#c4bc2c" stroke-width="1.1"/><rect x="7.7" y="1.3" width="5.9" height="10.2" rx="2.4" ry="1.6" fill="url(#gcy)" stroke="#16306c" stroke-width="1"/><ellipse cx="10.6" cy="2.9" rx="2.3" ry="1.1" fill="#eef4ff" opacity=".9"/><circle cx="6.4" cy="10.9" r="3.7" fill="url(#gsp)" stroke="#0c0c0c" stroke-width="1"/></svg>
<div class="t" style="left:1036px;top:231.5px;">Scene</div>
<div class="a" style="left:1263px;top:224px;width:13px;height:745.5px;border-radius:6.5px;border:1px solid #444;background:linear-gradient(90deg,#a0a0a0,#7e7e7e)"></div>
<div class="a" style="left:990px;top:254px;width:268px;height:1px;background:#414141"></div><div class="a" style="left:990px;top:255px;width:268px;height:1px;background:#8b8b8b"></div>
<svg style="left:997.7px;top:263.0px" width="9" height="8"><path d="M0 0.5H8.6L4.3 7.8Z" fill="#1a1a1a"/></svg>
<div class="h" style="left:1010px;top:260.5px;">Scene</div>
<svg style="left:1242px;top:266.0px" width="11" height="5" shape-rendering="crispEdges"><rect x="0" y="0" width="1.2" height="1" fill="#dcdcdc"/><rect x="0" y="1" width="1.2" height="1" fill="#1e1e1e"/><rect x="0" y="3" width="1.2" height="1" fill="#dcdcdc"/><rect x="0" y="4" width="1.2" height="1" fill="#1e1e1e"/><rect x="3" y="0" width="1.2" height="1" fill="#dcdcdc"/><rect x="3" y="1" width="1.2" height="1" fill="#1e1e1e"/><rect x="3" y="3" width="1.2" height="1" fill="#dcdcdc"/><rect x="3" y="4" width="1.2" height="1" fill="#1e1e1e"/><rect x="6" y="0" width="1.2" height="1" fill="#dcdcdc"/><rect x="6" y="1" width="1.2" height="1" fill="#1e1e1e"/><rect x="6" y="3" width="1.2" height="1" fill="#dcdcdc"/><rect x="6" y="4" width="1.2" height="1" fill="#1e1e1e"/><rect x="9" y="0" width="1.2" height="1" fill="#dcdcdc"/><rect x="9" y="1" width="1.2" height="1" fill="#1e1e1e"/><rect x="9" y="3" width="1.2" height="1" fill="#dcdcdc"/><rect x="9" y="4" width="1.2" height="1" fill="#1e1e1e"/></svg>
<div class="t" style="left:1000px;top:291.5px;">Camera:</div>
<div class="w txt" style="left:1084px;top:287px;width:171px;height:20px;background:linear-gradient(#b6b6b6,#9b9b9b);"></div>
<div class="t" style="left:1000px;top:316.5px;">Background:</div>
<div class="w txt" style="left:1084px;top:312px;width:171px;height:20px;background:linear-gradient(#b6b6b6,#9b9b9b);"></div>
<div class="t" style="left:1000px;top:341.5px;">Active Clip:</div>
<div class="w txt" style="left:1084px;top:337px;width:171px;height:20px;background:linear-gradient(#b6b6b6,#9b9b9b);"></div>
<svg style="left:1088.5px;top:289px" width="16" height="16" viewBox="0 0 16 16"><path d="M7.8 1.9L13.7 4.5V11.4L7.8 14.7L1.9 11.4V4.5Z" fill="#e99a3e" stroke="#2a1604" stroke-width="1.3" stroke-linejoin="round"/><path d="M7.8 1.9L13.7 4.5L7.8 7.4L1.9 4.5Z" fill="#fbd8a8"/><path d="M7.8 7.4L13.7 4.5V11.4L7.8 14.7Z" fill="#c67a24"/><path d="M2.8 5.2V11M2.4 4.8L7.8 7.5L13.2 4.8" stroke="#fff" stroke-width="1" fill="none" opacity=".9"/><path d="M7.8 7.8V14.2" stroke="#f4c080" stroke-width=".8" opacity=".8"/></svg>
<svg style="left:1238px;top:289px" width="16" height="16" viewBox="0 0 16 16"><path d="M1.5 14.5L3 11L9 5L11 7L5 13Z" fill="#e8e8e8" stroke="#222" stroke-width=".9"/><path d="M8.5 4L12 7.5M9.8 5.4L12.4 2.4C13.4 1.4 14.8 2.8 13.8 3.8L10.8 6.4Z" fill="#222" stroke="#222" stroke-width="1.2"/></svg>
<svg style="left:1088.5px;top:314px" width="16" height="16" viewBox="0 0 16 16"><defs><linearGradient id="gcy" x1="0" y1="0" x2="1" y2="0"><stop offset="0" stop-color="#e8f0ff"/><stop offset=".35" stop-color="#9ab8ec"/><stop offset=".7" stop-color="#3a6ac4"/><stop offset="1" stop-color="#2a52a8"/></linearGradient><radialGradient id="gsp" cx=".38" cy=".35" r=".75"><stop offset="0" stop-color="#fff"/><stop offset=".6" stop-color="#e4e4e4"/><stop offset="1" stop-color="#8a8a8a"/></radialGradient></defs><circle cx="3.4" cy="3" r="2.9" fill="#e8e070" opacity=".25"/><circle cx="3.4" cy="3" r="1.7" fill="#fff" stroke="#c4bc2c" stroke-width="1.1"/><rect x="7.7" y="1.3" width="5.9" height="10.2" rx="2.4" ry="1.6" fill="url(#gcy)" stroke="#16306c" stroke-width="1"/><ellipse cx="10.6" cy="2.9" rx="2.3" ry="1.1" fill="#eef4ff" opacity=".9"/><circle cx="6.4" cy="10.9" r="3.7" fill="url(#gsp)" stroke="#0c0c0c" stroke-width="1"/></svg>
<svg style="left:1088px;top:339px" width="16" height="16" viewBox="0 0 16 16"><rect x="6.5" y="1.5" width="8.5" height="7" fill="#e8ecf4" stroke="#1a2a58" stroke-width="1"/><rect x="1" y="8" width="9.5" height="7" fill="#f0f4ff" stroke="#1a2a58" stroke-width="1"/><path d="M1 10.4H10.5M1 13H10.5M4 8V15M7.4 8V15M8.5 4H15M9.5 1.5V4M12.5 1.5V4" stroke="#2a4a98" stroke-width=".9"/><path d="M5.5 7.5C5.5 5 7 4 9 5" stroke="#111" stroke-width="1.3" fill="none"/></svg>
<div class="a" style="left:990px;top:364px;width:268px;height:1px;background:#414141"></div><div class="a" style="left:990px;top:365px;width:268px;height:1px;background:#8b8b8b"></div>
<svg style="left:997.7px;top:373.0px" width="9" height="8"><path d="M0 0.5H8.6L4.3 7.8Z" fill="#1a1a1a"/></svg>
<div class="h" style="left:1010px;top:370.5px;">Units</div>
<svg style="left:1242px;top:376.0px" width="11" height="5" shape-rendering="crispEdges"><rect x="0" y="0" width="1.2" height="1" fill="#dcdcdc"/><rect x="0" y="1" width="1.2" height="1" fill="#1e1e1e"/><rect x="0" y="3" width="1.2" height="1" fill="#dcdcdc"/><rect x="0" y="4" width="1.2" height="1" fill="#1e1e1e"/><rect x="3" y="0" width="1.2" height="1" fill="#dcdcdc"/><rect x="3" y="1" width="1.2" height="1" fill="#1e1e1e"/><rect x="3" y="3" width="1.2" height="1" fill="#dcdcdc"/><rect x="3" y="4" width="1.2" height="1" fill="#1e1e1e"/><rect x="6" y="0" width="1.2" height="1" fill="#dcdcdc"/><rect x="6" y="1" width="1.2" height="1" fill="#1e1e1e"/><rect x="6" y="3" width="1.2" height="1" fill="#dcdcdc"/><rect x="6" y="4" width="1.2" height="1" fill="#1e1e1e"/><rect x="9" y="0" width="1.2" height="1" fill="#dcdcdc"/><rect x="9" y="1" width="1.2" height="1" fill="#1e1e1e"/><rect x="9" y="3" width="1.2" height="1" fill="#dcdcdc"/><rect x="9" y="4" width="1.2" height="1" fill="#1e1e1e"/></svg>
<div class="w menu" style="left:993px;top:397px;width:222px;height:20px;border-radius:4.5px 0 0 4.5px;"><span class="t" style="top:3.5px;left:6px;">Centimeters</span></div>
<svg style="left:1205px;top:400.2px" width="7" height="14"><path d="M3.5 .2L6.3 5.9H0.7Z M3.5 13.2L6.3 8.2H0.7Z" fill="#cfcfcf"/></svg>
<div class="w reg" style="left:1214px;top:397px;width:21px;height:20px;border-radius:0;"></div>
<svg style="left:1218.5px;top:401px" width="12" height="12"><path d="M6 .2V11.8M.2 6H11.8" stroke="#222" stroke-width="3.8"/><path d="M6 1.1V10.9M1.1 6H10.9" stroke="#fff" stroke-width="2"/></svg>
<div class="w reg" style="left:1234px;top:397px;width:21px;height:20px;border-radius:0 4.5px 4.5px 0;"></div>
<svg style="left:1238.5px;top:401px" width="12" height="12"><path d="M.2 6H11.8" stroke="#222" stroke-width="3.8"/><path d="M1.1 6H10.9" stroke="#fff" stroke-width="2"/></svg>
<div class="t" style="left:1000px;top:437.5px;">Length:</div>
<div class="w menu" style="left:1089px;top:433px;width:166px;height:20px;"><span class="t" style="top:3.5px;left:7px;">Metric</span></div>
<svg style="left:1244.5px;top:436.2px" width="7" height="14"><path d="M3.5 .2L6.3 5.9H0.7Z M3.5 13.2L6.3 8.2H0.7Z" fill="#cfcfcf"/></svg>
<div class="t" style="left:1000px;top:462.5px;">Angle:</div>
<div class="w menu" style="left:1089px;top:458px;width:166px;height:20px;"><span class="t" style="top:3.5px;left:7px;">Degrees</span></div>
<svg style="left:1244.5px;top:461.2px" width="7" height="14"><path d="M3.5 .2L6.3 5.9H0.7Z M3.5 13.2L6.3 8.2H0.7Z" fill="#cfcfcf"/></svg>
<div class="t" style="left:1000px;top:487.5px;">Unit Scale:</div>
<div class="w num" style="left:1089px;top:483px;width:166px;height:20px;"></div>
<div class="t n" style="left:1089px;top:487.5px;width:150px;text-align:right">0.010000</div>
<svg style="left:1094px;top:490px" width="4" height="6"><path d="M3.6 0V6L0 3Z" fill="#747474"/></svg>
<svg style="left:1246px;top:490px" width="4" height="6"><path d="M.4 0V6L4 3Z" fill="#747474"/></svg>
<div class="w opt" style="left:1092px;top:508px;width:14px;height:14px;"></div>
<div class="t" style="left:1114px;top:509.5px;">Separate Units</div>
<div class="a" style="left:990px;top:532px;width:268px;height:1px;background:#414141"></div><div class="a" style="left:990px;top:533px;width:268px;height:1px;background:#8b8b8b"></div>
<svg style="left:997.7px;top:541.0px" width="9" height="8"><path d="M0 0.5H8.6L4.3 7.8Z" fill="#1a1a1a"/></svg>
<div class="h" style="left:1010px;top:538.5px;">Keying Sets</div>
<svg style="left:1242px;top:544.0px" width="11" height="5" shape-rendering="crispEdges"><rect x="0" y="0" width="1.2" height="1" fill="#dcdcdc"/><rect x="0" y="1" width="1.2" height="1" fill="#1e1e1e"/><rect x="0" y="3" width="1.2" height="1" fill="#dcdcdc"/><rect x="0" y="4" width="1.2" height="1" fill="#1e1e1e"/><rect x="3" y="0" width="1.2" height="1" fill="#dcdcdc"/><rect x="3" y="1" width="1.2" height="1" fill="#1e1e1e"/><rect x="3" y="3" width="1.2" height="1" fill="#dcdcdc"/><rect x="3" y="4" width="1.2" height="1" fill="#1e1e1e"/><rect x="6" y="0" width="1.2" height="1" fill="#dcdcdc"/><rect x="6" y="1" width="1.2" height="1" fill="#1e1e1e"/><rect x="6" y="3" width="1.2" height="1" fill="#dcdcdc"/><rect x="6" y="4" width="1.2" height="1" fill="#1e1e1e"/><rect x="9" y="0" width="1.2" height="1" fill="#dcdcdc"/><rect x="9" y="1" width="1.2" height="1" fill="#1e1e1e"/><rect x="9" y="3" width="1.2" height="1" fill="#dcdcdc"/><rect x="9" y="4" width="1.2" height="1" fill="#1e1e1e"/></svg>
<div class="w" style="left:993px;top:565px;width:234px;height:40px;background:#828282;border-color:#2e2e2e;border-radius:4px"></div>
<svg style="left:1002.5px;top:589.5px" width="10" height="10"><circle cx="5" cy="5" r="4" fill="#a4a4a4" stroke="#333" stroke-width="1"/><path d="M2.8 5H7.2M5 2.8V7.2" stroke="#222" stroke-width="1.1"/></svg>
<svg style="left:1112px;top:592px" width="15" height="6"><path d="M0 1.5H14M0 4.5H14" stroke="#1c1c1c" stroke-width="1"/><path d="M0 2.5H14M0 5.5H14" stroke="#c8c8c8" stroke-width=".8"/></svg>
<div class="w reg" style="left:1235px;top:565px;width:20px;height:20px;border-radius:4.5px 4.5px 0 0;"></div>
<svg style="left:1239px;top:569px" width="12" height="12"><path d="M6 .2V11.8M.2 6H11.8" stroke="#222" stroke-width="3.8"/><path d="M6 1.1V10.9M1.1 6H10.9" stroke="#fff" stroke-width="2"/></svg>
<div class="w reg" style="left:1235px;top:584px;width:20px;height:21px;border-radius:0 0 4.5px 4.5px;background:#858585;border-color:#555;"></div>
<svg style="left:1239px;top:588.5px" width="12" height="12"><path d="M.2 6H11.8" stroke="#727272" stroke-width="3.8"/><path d="M1.1 6H10.9" stroke="#9c9c9c" stroke-width="2"/></svg>
<div class="a" style="left:990px;top:612px;width:268px;height:1px;background:#414141"></div><div class="a" style="left:990px;top:613px;width:268px;height:1px;background:#8b8b8b"></div>
<svg style="left:998.2px;top:620.5px" width="8" height="9"><path d="M0.3 0.2V8.8L7.8 4.5Z" fill="#1a1a1a"/></svg>
<div class="h" style="left:1010px;top:618.5px;">Color Management</div>
<svg style="left:1242px;top:624.0px" width="11" height="5" shape-rendering="crispEdges"><rect x="0" y="0" width="1.2" height="1" fill="#dcdcdc"/><rect x="0" y="1" width="1.2" height="1" fill="#1e1e1e"/><rect x="0" y="3" width="1.2" height="1" fill="#dcdcdc"/><rect x="0" y="4" width="1.2" height="1" fill="#1e1e1e"/><rect x="3" y="0" width="1.2" height="1" fill="#dcdcdc"/><rect x="3" y="1" width="1.2" height="1" fill="#1e1e1e"/><rect x="3" y="3" width="1.2" height="1" fill="#dcdcdc"/><rect x="3" y="4" width="1.2" height="1" fill="#1e1e1e"/><rect x="6" y="0" width="1.2" height="1" fill="#dcdcdc"/><rect x="6" y="1" width="1.2" height="1" fill="#1e1e1e"/><rect x="6" y="3" width="1.2" height="1" fill="#dcdcdc"/><rect x="6" y="4" width="1.2" height="1" fill="#1e1e1e"/><rect x="9" y="0" width="1.2" height="1" fill="#dcdcdc"/><rect x="9" y="1" width="1.2" height="1" fill="#1e1e1e"/><rect x="9" y="3" width="1.2" height="1" fill="#dcdcdc"/><rect x="9" y="4" width="1.2" height="1" fill="#1e1e1e"/></svg>
<div class="a" style="left:990px;top:636px;width:268px;height:1px;background:#414141"></div><div class="a" style="left:990px;top:637px;width:268px;height:1px;background:#8b8b8b"></div>
<svg style="left:998.2px;top:644.5px" width="8" height="9"><path d="M0.3 0.2V8.8L7.8 4.5Z" fill="#1a1a1a"/></svg>
<div class="h" style="left:1010px;top:642.5px;">Audio</div>
<svg style="left:1242px;top:648.0px" width="11" height="5" shape-rendering="crispEdges"><rect x="0" y="0" width="1.2" height="1" fill="#dcdcdc"/><rect x="0" y="1" width="1.2" height="1" fill="#1e1e1e"/><rect x="0" y="3" width="1.2" height="1" fill="#dcdcdc"/><rect x="0" y="4" width="1.2" height="1" fill="#1e1e1e"/><rect x="3" y="0" width="1.2" height="1" fill="#dcdcdc"/><rect x="3" y="1" width="1.2" height="1" fill="#1e1e1e"/><rect x="3" y="3" width="1.2" height="1" fill="#dcdcdc"/><rect x="3" y="4" width="1.2" height="1" fill="#1e1e1e"/><rect x="6" y="0" width="1.2" height="1" fill="#dcdcdc"/><rect x="6" y="1" width="1.2" height="1" fill="#1e1e1e"/><rect x="6" y="3" width="1.2" height="1" fill="#dcdcdc"/><rect x="6" y="4" width="1.2" height="1" fill="#1e1e1e"/><rect x="9" y="0" width="1.2" height="1" fill="#dcdcdc"/><rect x="9" y="1" width="1.2" height="1" fill="#1e1e1e"/><rect x="9" y="3" width="1.2" height="1" fill="#dcdcdc"/><rect x="9" y="4" width="1.2" height="1" fill="#1e1e1e"/></svg>
<div class="a" style="left:990px;top:660px;width:268px;height:1px;background:#414141"></div><div class="a" style="left:990px;top:661px;width:268px;height:1px;background:#8b8b8b"></div>
<svg style="left:997.7px;top:669.0px" width="9" height="8"><path d="M0 0.5H8.6L4.3 7.8Z" fill="#1a1a1a"/></svg>
<div class="w opt" style="left:1010px;top:666px;width:14px;height:14px;"></div>
<svg style="left:1010px;top:663px" width="16" height="16"><path d="M3.4 8.8L6.4 12L13.2 2.8" stroke="#1a1a1a" stroke-width="3.6" fill="none"/><path d="M3.4 8.8L6.4 12L13.2 2.8" stroke="#fff" stroke-width="1.9" fill="none"/></svg>
<div class="h" style="left:1030px;top:666.5px;">Gravity</div>
<svg style="left:1242px;top:672.0px" width="11" height="5" shape-rendering="crispEdges"><rect x="0" y="0" width="1.2" height="1" fill="#dcdcdc"/><rect x="0" y="1" width="1.2" height="1" fill="#1e1e1e"/><rect x="0" y="3" width="1.2" height="1" fill="#dcdcdc"/><rect x="0" y="4" width="1.2" height="1" fill="#1e1e1e"/><rect x="3" y="0" width="1.2" height="1" fill="#dcdcdc"/><rect x="3" y="1" width="1.2" height="1" fill="#1e1e1e"/><rect x="3" y="3" width="1.2" height="1" fill="#dcdcdc"/><rect x="3" y="4" width="1.2" height="1" fill="#1e1e1e"/><rect x="6" y="0" width="1.2" height="1" fill="#dcdcdc"/><rect x="6" y="1" width="1.2" height="1" fill="#1e1e1e"/><rect x="6" y="3" width="1.2" height="1" fill="#dcdcdc"/><rect x="6" y="4" width="1.2" height="1" fill="#1e1e1e"/><rect x="9" y="0" width="1.2" height="1" fill="#dcdcdc"/><rect x="9" y="1" width="1.2" height="1" fill="#1e1e1e"/><rect x="9" y="3" width="1.2" height="1" fill="#dcdcdc"/><rect x="9" y="4" width="1.2" height="1" fill="#1e1e1e"/></svg>
<div class="w num" style="left:993px;top:693px;width:87px;height:20px;border-radius:10px 0 0 10px;"></div>
<div class="t" style="left:1008px;top:697.5px;">X:</div>
<div class="t" style="left:993px;top:697.5px;width:70.5px;text-align:right">0m/s²</div>
<svg style="left:998px;top:700px" width="4" height="6"><path d="M3.6 0V6L0 3Z" fill="#747474"/></svg>
<svg style="left:1071px;top:700px" width="4" height="6"><path d="M.4 0V6L4 3Z" fill="#747474"/></svg>
<div class="w num" style="left:1079px;top:693px;width:88px;height:20px;border-radius:0;"></div>
<div class="t" style="left:1094px;top:697.5px;">Y:</div>
<div class="t" style="left:1079px;top:697.5px;width:71.5px;text-align:right">0m/s²</div>
<svg style="left:1084px;top:700px" width="4" height="6"><path d="M3.6 0V6L0 3Z" fill="#747474"/></svg>
<svg style="left:1158px;top:700px" width="4" height="6"><path d="M.4 0V6L4 3Z" fill="#747474"/></svg>
<div class="w num" style="left:1166px;top:693px;width:89px;height:20px;border-radius:0 10px 10px 0;"></div>
<div class="t" style="left:1181px;top:697.5px;">Z:</div>
<div class="t" style="left:1166px;top:697.5px;width:72.5px;text-align:right">-9.8m/s²</div>
<svg style="left:1171px;top:700px" width="4" height="6"><path d="M3.6 0V6L0 3Z" fill="#747474"/></svg>
<svg style="left:1246px;top:700px" width="4" height="6"><path d="M.4 0V6L4 3Z" fill="#747474"/></svg>
<div class="a" style="left:990px;top:720px;width:268px;height:1px;background:#414141"></div><div class="a" style="left:990px;top:721px;width:268px;height:1px;background:#8b8b8b"></div>
<svg style="left:997.7px;top:729.0px" width="9" height="8"><path d="M0 0.5H8.6L4.3 7.8Z" fill="#1a1a1a"/></svg>
<div class="h" style="left:1010px;top:726.5px;">Rigid Body World</div>
<svg style="left:1242px;top:732.0px" width="11" height="5" shape-rendering="crispEdges"><rect x="0" y="0" width="1.2" height="1" fill="#dcdcdc"/><rect x="0" y="1" width="1.2" height="1" fill="#1e1e1e"/><rect x="0" y="3" width="1.2" height="1" fill="#dcdcdc"/><rect x="0" y="4" width="1.2" height="1" fill="#1e1e1e"/><rect x="3" y="0" width="1.2" height="1" fill="#dcdcdc"/><rect x="3" y="1" width="1.2" height="1" fill="#1e1e1e"/><rect x="3" y="3" width="1.2" height="1" fill="#dcdcdc"/><rect x="3" y="4" width="1.2" height="1" fill="#1e1e1e"/><rect x="6" y="0" width="1.2" height="1" fill="#dcdcdc"/><rect x="6" y="1" width="1.2" height="1" fill="#1e1e1e"/><rect x="6" y="3" width="1.2" height="1" fill="#dcdcdc"/><rect x="6" y="4" width="1.2" height="1" fill="#1e1e1e"/><rect x="9" y="0" width="1.2" height="1" fill="#dcdcdc"/><rect x="9" y="1" width="1.2" height="1" fill="#1e1e1e"/><rect x="9" y="3" width="1.2" height="1" fill="#dcdcdc"/><rect x="9" y="4" width="1.2" height="1" fill="#1e1e1e"/></svg>
<div class="w tool" style="left:993px;top:753px;width:262px;height:20px;"><span class="t" style="top:3.5px;left:0;width:100%;text-align:center;">Add Rigid Body World</span></div>
<div class="a" style="left:990px;top:780px;width:268px;height:1px;background:#414141"></div><div class="a" style="left:990px;top:781px;width:268px;height:1px;background:#8b8b8b"></div>
<svg style="left:997.7px;top:789.0px" width="9" height="8"><path d="M0 0.5H8.6L4.3 7.8Z" fill="#1a1a1a"/></svg>
<div class="w opt" style="left:1010px;top:786px;width:14px;height:14px;"></div>
<div class="h" style="left:1030px;top:786.5px;">Simplify</div>
<svg style="left:1242px;top:792.0px" width="11" height="5" shape-rendering="crispEdges"><rect x="0" y="0" width="1.2" height="1" fill="#dcdcdc"/><rect x="0" y="1" width="1.2" height="1" fill="#1e1e1e"/><rect x="0" y="3" width="1.2" height="1" fill="#dcdcdc"/><rect x="0" y="4" width="1.2" height="1" fill="#1e1e1e"/><rect x="3" y="0" width="1.2" height="1" fill="#dcdcdc"/><rect x="3" y="1" width="1.2" height="1" fill="#1e1e1e"/><rect x="3" y="3" width="1.2" height="1" fill="#dcdcdc"/><rect x="3" y="4" width="1.2" height="1" fill="#1e1e1e"/><rect x="6" y="0" width="1.2" height="1" fill="#dcdcdc"/><rect x="6" y="1" width="1.2" height="1" fill="#1e1e1e"/><rect x="6" y="3" width="1.2" height="1" fill="#dcdcdc"/><rect x="6" y="4" width="1.2" height="1" fill="#1e1e1e"/><rect x="9" y="0" width="1.2" height="1" fill="#dcdcdc"/><rect x="9" y="1" width="1.2" height="1" fill="#1e1e1e"/><rect x="9" y="3" width="1.2" height="1" fill="#dcdcdc"/><rect x="9" y="4" width="1.2" height="1" fill="#1e1e1e"/></svg>
<div class="t" style="left:1000px;top:817.5px;color:#3f3f3f">Viewport:</div>
<div class="t" style="left:1136px;top:817.5px;color:#3f3f3f">Render:</div>
<div class="w" style="left:993px;top:835px;width:127px;height:20px;border-radius:10px;border-color:#505050;background:linear-gradient(#969696,#888888)"></div>
<div class="t" style="left:1009px;top:839.5px;color:#3f3f3f">Subdivision:</div>
<div class="t n" style="left:993px;top:839.5px;width:112px;text-align:right;color:#3f3f3f">6</div>
<svg style="left:998px;top:843.0px" width="4" height="6"><path d="M3.6 0V6L0 3Z" fill="#6a6a6a"/></svg>
<svg style="left:1111px;top:843.0px" width="4" height="6"><path d="M.4 0V6L4 3Z" fill="#6a6a6a"/></svg>
<div class="w" style="left:1128px;top:835px;width:127px;height:20px;border-radius:10px;border-color:#505050;background:linear-gradient(#969696,#888888)"></div>
<div class="t" style="left:1144px;top:839.5px;color:#3f3f3f">Subdivision:</div>
<div class="t n" style="left:1128px;top:839.5px;width:112px;text-align:right;color:#3f3f3f">6</div>
<svg style="left:1133px;top:843.0px" width="4" height="6"><path d="M3.6 0V6L0 3Z" fill="#6a6a6a"/></svg>
<svg style="left:1246px;top:843.0px" width="4" height="6"><path d="M.4 0V6L4 3Z" fill="#6a6a6a"/></svg>
<div class="w" style="left:993px;top:857px;width:127px;height:20px;border-radius:10px;border-color:#505050;background:linear-gradient(#969696,#888888)"></div>
<div class="t" style="left:993px;top:861.5px;width:127px;text-align:center;color:#3f3f3f">Child Particl: <span class="n">1.000</span></div>
<div class="w" style="left:1128px;top:857px;width:127px;height:20px;border-radius:10px;border-color:#505050;background:linear-gradient(#969696,#888888)"></div>
<div class="t" style="left:1128px;top:861.5px;width:127px;text-align:center;color:#3f3f3f">Child Particl: <span class="n">1.000</span></div>
<div class="w" style="left:1128px;top:879px;width:127px;height:20px;border-radius:10px;border-color:#505050;background:linear-gradient(#969696,#888888)"></div>
<div class="t" style="left:1144px;top:883.5px;color:#3f3f3f">Shadow Sampl:</div>
<div class="t n" style="left:1128px;top:883.5px;width:112px;text-align:right;color:#3f3f3f">16</div>
<svg style="left:1133px;top:887.0px" width="4" height="6"><path d="M3.6 0V6L0 3Z" fill="#6a6a6a"/></svg>
<svg style="left:1246px;top:887.0px" width="4" height="6"><path d="M.4 0V6L4 3Z" fill="#6a6a6a"/></svg>
<div class="w" style="left:1128px;top:901px;width:127px;height:20px;border-radius:10px;border-color:#505050;background:linear-gradient(#969696,#888888)"></div>
<div class="t" style="left:1128px;top:905.5px;width:127px;text-align:center;color:#3f3f3f">AO and SSS:  <span class="n">1.000</span></div>
<div class="w opt" style="left:1131px;top:926px;width:14px;height:14px;background:linear-gradient(#666,#5a5a5a);border-color:#4a4a4a;"></div>
<div class="t" style="left:1153px;top:927.5px;color:#3f3f3f">Skip Quad to Tria...</div>
<div class="a" style="left:990px;top:950px;width:268px;height:1px;background:#414141"></div><div class="a" style="left:990px;top:951px;width:268px;height:1px;background:#8b8b8b"></div>
<svg style="left:998.2px;top:958.5px" width="8" height="9"><path d="M0.3 0.2V8.8L7.8 4.5Z" fill="#1a1a1a"/></svg>
<div class="h" style="left:1010px;top:956.5px;">Custom Properties</div>
<svg style="left:1242px;top:962.0px" width="11" height="5" shape-rendering="crispEdges"><rect x="0" y="0" width="1.2" height="1" fill="#dcdcdc"/><rect x="0" y="1" width="1.2" height="1" fill="#1e1e1e"/><rect x="0" y="3" width="1.2" height="1" fill="#dcdcdc"/><rect x="0" y="4" width="1.2" height="1" fill="#1e1e1e"/><rect x="3" y="0" width="1.2" height="1" fill="#dcdcdc"/><rect x="3" y="1" width="1.2" height="1" fill="#1e1e1e"/><rect x="3" y="3" width="1.2" height="1" fill="#dcdcdc"/><rect x="3" y="4" width="1.2" height="1" fill="#1e1e1e"/><rect x="6" y="0" width="1.2" height="1" fill="#dcdcdc"/><rect x="6" y="1" width="1.2" height="1" fill="#1e1e1e"/><rect x="6" y="3" width="1.2" height="1" fill="#dcdcdc"/><rect x="6" y="4" width="1.2" height="1" fill="#1e1e1e"/><rect x="9" y="0" width="1.2" height="1" fill="#dcdcdc"/><rect x="9" y="1" width="1.2" height="1" fill="#1e1e1e"/><rect x="9" y="3" width="1.2" height="1" fill="#dcdcdc"/><rect x="9" y="4" width="1.2" height="1" fill="#1e1e1e"/></svg>
<svg style="left:986.5px;top:962px;overflow:hidden" width="12" height="12"><path d="M0 1L11 12M0 4.5L7.5 12M0 8L4 12" stroke="#1c1c1c" stroke-width="1.2" fill="none"/><path d="M0 1L11 12M0 4.5L7.5 12M0 8L4 12" stroke="#b0b0b0" stroke-width="1" fill="none" transform="translate(0,1.2)"/></svg>
</div></body></html>
